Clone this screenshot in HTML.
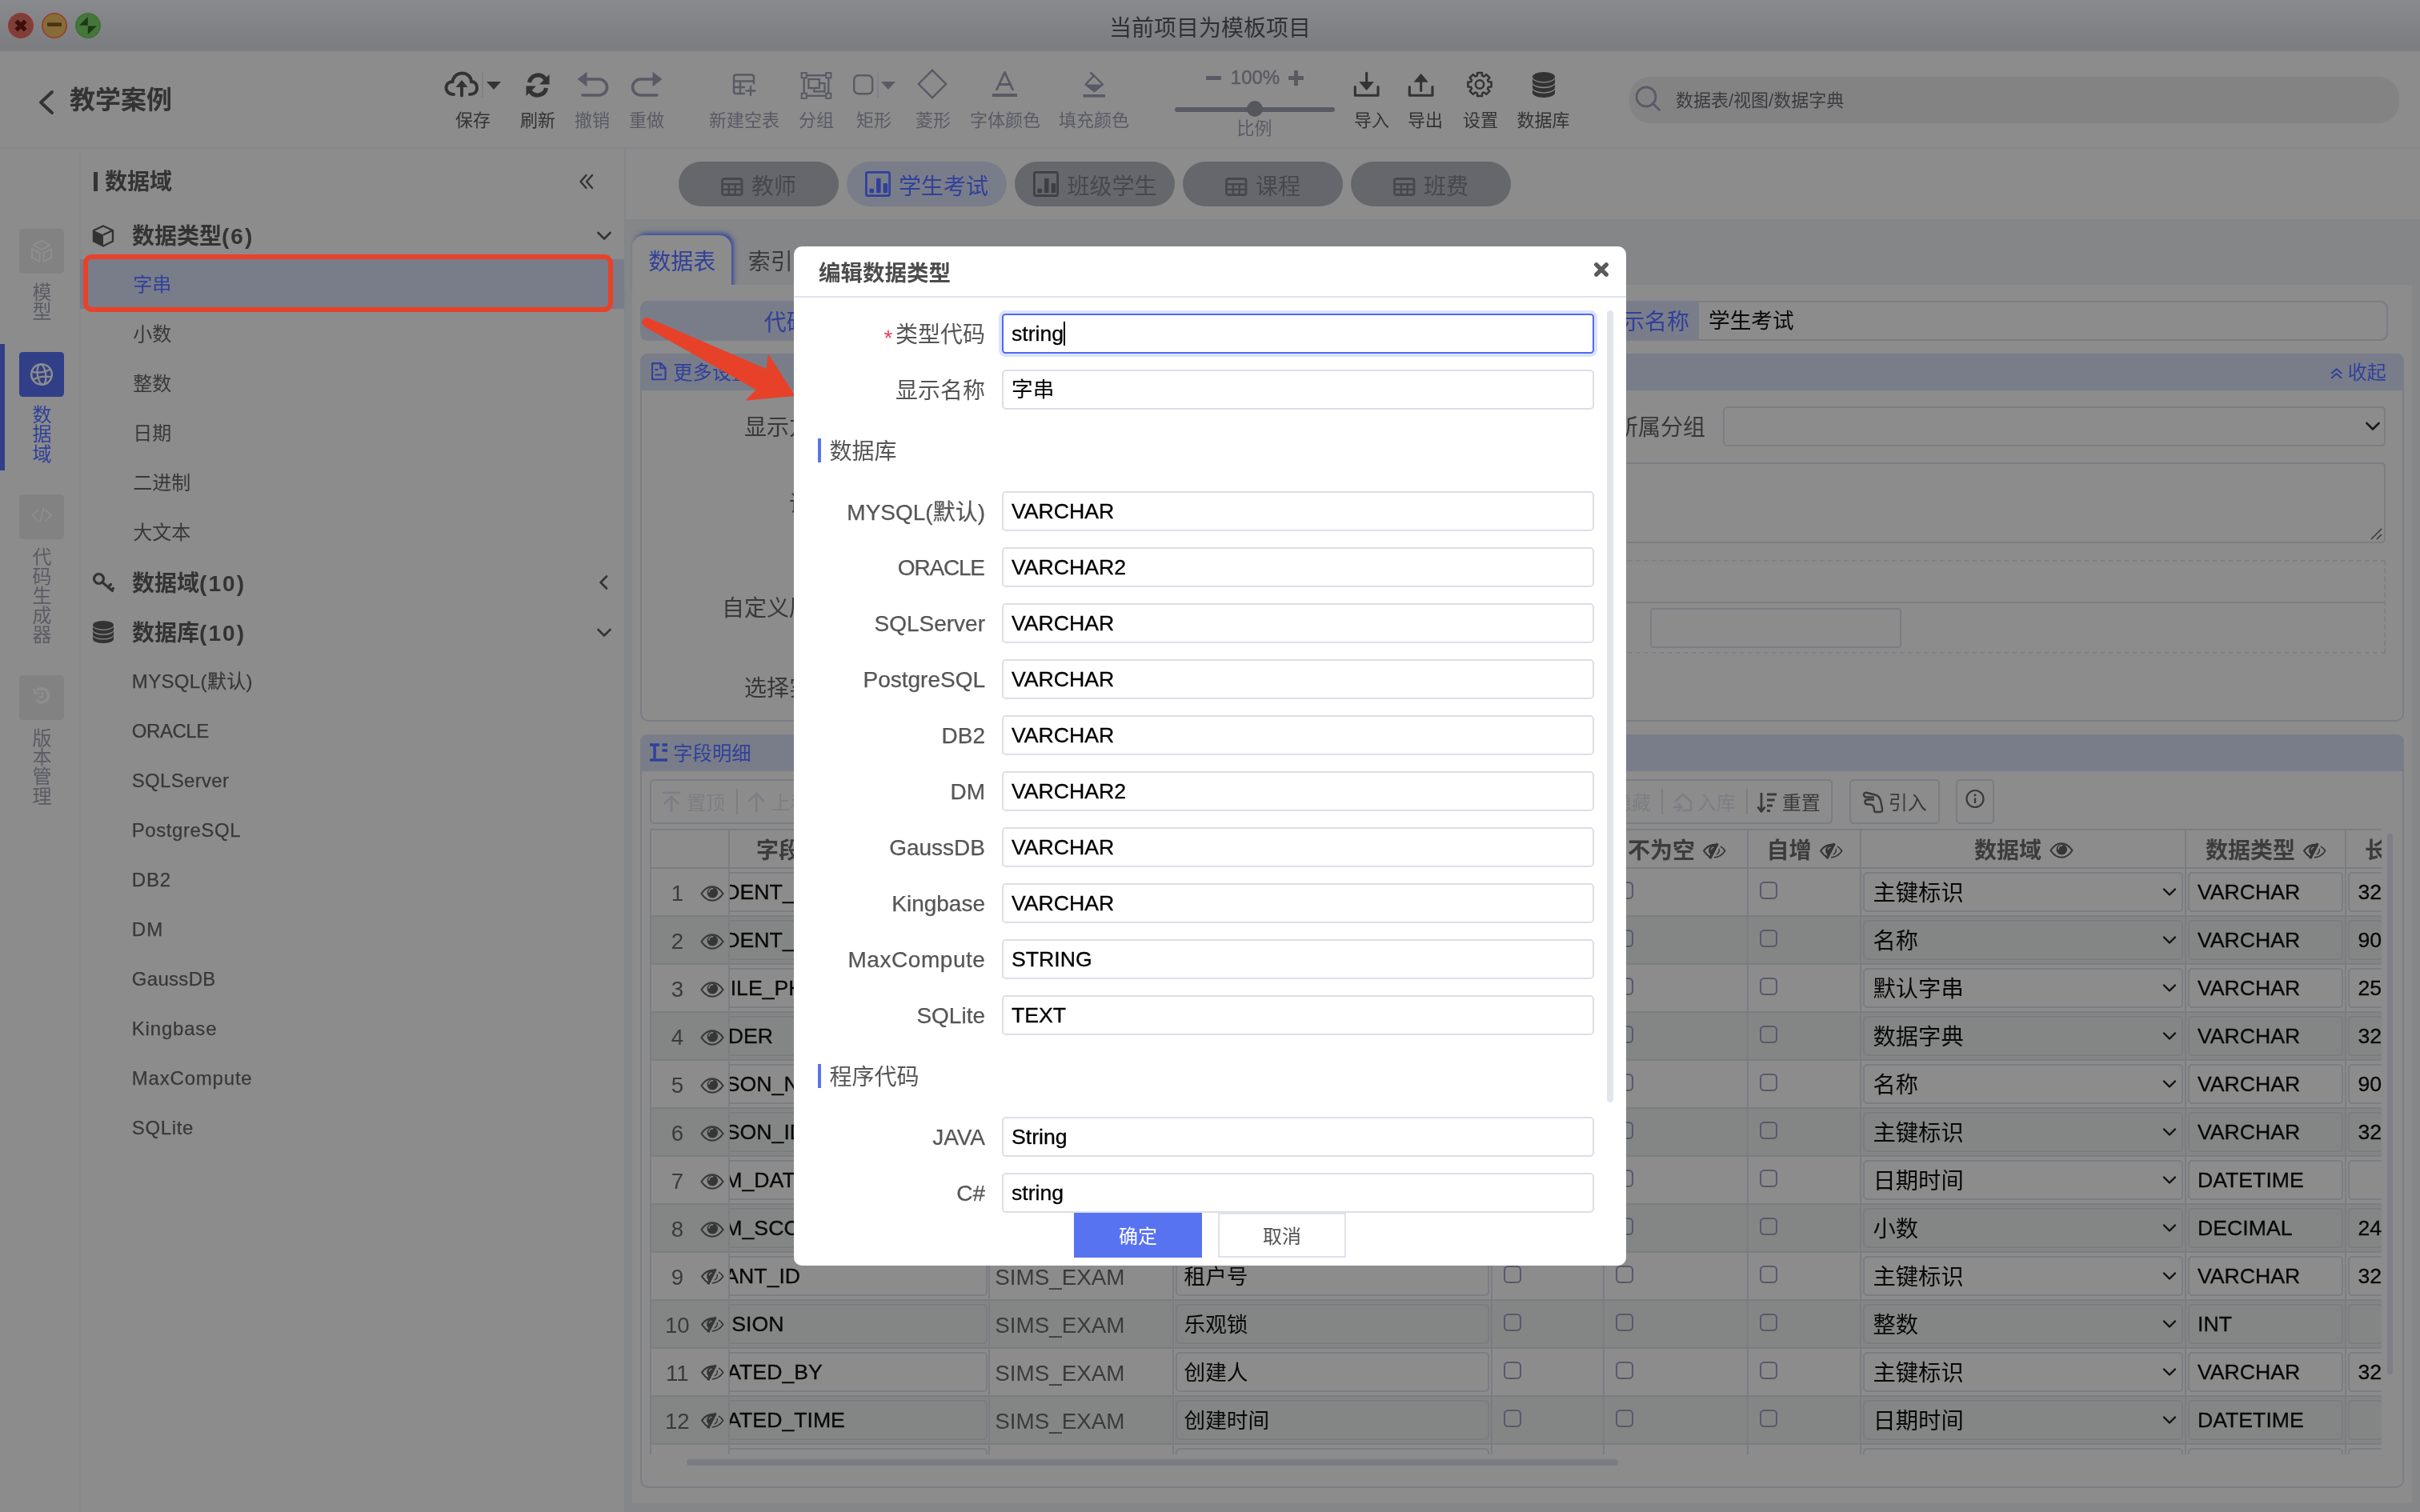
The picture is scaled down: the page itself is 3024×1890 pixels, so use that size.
<!DOCTYPE html>
<html lang="zh-CN"><head><meta charset="utf-8"><title>编辑数据类型</title>
<style>
html,body{margin:0;padding:0}
body{width:3024px;height:1890px;position:relative;overflow:hidden;background:#8c8c8c;font-family:'Liberation Sans','Noto Sans CJK SC',sans-serif}
.b{position:absolute;box-sizing:border-box}
.t{position:absolute;white-space:nowrap;font-family:'Liberation Sans','Noto Sans CJK SC',sans-serif}
.clip{position:absolute;overflow:hidden}
#root{position:absolute;left:0;top:0;width:3024px;height:1890px;overflow:hidden;will-change:transform}
</style></head><body><div id="root">
<div class="b" style="left:0px;top:0px;width:3024px;height:64px;background:linear-gradient(#898a8d,#7b7c7f);"></div>
<div class="t" style="top:22.0px;font-size:28px;line-height:28px;color:#303033;left:762.0px;width:1500px;text-align:center;">当前项目为模板项目</div>
<svg class="b" style="left:0px;top:0px;" width="140" height="64" viewBox="0 0 140 64"><circle cx="26" cy="32" r="15.200" fill="#7f3f38" stroke="#923a32" stroke-width="1.600"/><path d="M20.300 26.300 L31.700 37.700 M31.700 26.300 L20.300 37.700" stroke="#3e0e09" stroke-width="5.400" stroke-linecap="butt"/><circle cx="68" cy="32" r="15.200" fill="#866d38" stroke="#983b30" stroke-width="1.600"/><rect x="59" y="28.300" width="18" height="4.600" rx="0.800" fill="#4e3214"/><circle cx="110" cy="32" r="15.200" fill="#45763b" stroke="#40703a" stroke-width="1.600"/><path d="M99 31.700 L109.800 21 L109.800 31.700 Z M121 32.400 L109.800 43 L109.800 32.400 Z" fill="#1d3812"/></svg>
<div class="b" style="left:0px;top:64px;width:3024px;height:122px;background:#8c8c8c;"></div>
<div class="b" style="left:0px;top:184px;width:3024px;height:2px;background:#838588;"></div>
<svg class="b" style="left:40px;top:105px;" width="40" height="46" viewBox="0 0 40 46"><path d="M25 10 L11 23 L25 36" fill="none" stroke="#333" stroke-width="4" stroke-linecap="round" stroke-linejoin="round"/></svg>
<div class="t" style="top:109.3px;font-size:32px;line-height:32px;color:#333;font-weight:700;left:87.0px;">教学案例</div>
<svg class="b" style="left:552px;top:86px;" width="50" height="40" viewBox="0 0 50 40"><path d="M15 32 C7 32 5.5 26 5.5 24 C5.5 19 9 16 13.5 16 C14.5 9 20 5.5 25.5 5.5 C32 5.5 36.5 10 37 16 C41.5 16 44 19.5 44 24 C44 28.5 40.500 32 35 32" fill="none" stroke="#333" stroke-width="4" stroke-linecap="round"/><path d="M25 33.500 V21" stroke="#333" stroke-width="4" stroke-linecap="round"/><path d="M17.5 23 L25 14 L32.5 23 Z" fill="#333"/></svg>
<div class="b" style="left:602px;top:90px;width:2px;height:32px;background:#80818a;"></div>
<svg class="b" style="left:606px;top:100px;" width="22" height="14" viewBox="0 0 22 14"><path d="M2 2 H20 L11 12 Z" fill="#333"/></svg>
<div class="t" style="top:140.3px;font-size:22px;line-height:22px;color:#333;left:-159.0px;width:1500px;text-align:center;">保存</div>
<svg class="b" style="left:654px;top:88px;" width="36" height="36" viewBox="0 0 36 36"><path d="M7.5 15 A11 11 0 0 1 27.5 11" fill="none" stroke="#333" stroke-width="5.2"/><path d="M32.5 5 V17.5 H20 Z" fill="#333"/><path d="M28.5 22 A11 11 0 0 1 8.5 26" fill="none" stroke="#333" stroke-width="5.2"/><path d="M3.5 32 V19.500 H16 Z" fill="#333"/></svg>
<div class="t" style="top:140.3px;font-size:22px;line-height:22px;color:#333;left:-78.0px;width:1500px;text-align:center;">刷新</div>
<svg class="b" style="left:720px;top:89px;" width="42" height="34" viewBox="0 0 42 34"><path d="M13 10 H28.5 A10 10 0 0 1 28.5 30 H8" fill="none" stroke="#5a5a66" stroke-width="3.6" stroke-linecap="round"/><path d="M1.5 10 L13.5 0.800 V19.200 Z" fill="#5a5a66"/></svg>
<div class="t" style="top:140.3px;font-size:22px;line-height:22px;color:#5a5a66;left:-10.0px;width:1500px;text-align:center;">撤销</div>
<svg class="b" style="left:787px;top:89px;" width="42" height="34" viewBox="0 0 42 34"><g transform="translate(42,0) scale(-1,1)"><path d="M13 10 H28.5 A10 10 0 0 1 28.5 30 H8" fill="none" stroke="#5a5a66" stroke-width="3.6" stroke-linecap="round"/><path d="M1.5 10 L13.5 0.800 V19.200 Z" fill="#5a5a66"/></g></svg>
<div class="t" style="top:140.3px;font-size:22px;line-height:22px;color:#5a5a66;left:58.0px;width:1500px;text-align:center;">重做</div>
<svg class="b" style="left:914px;top:90px;" width="32" height="32" viewBox="0 0 32 32"><path d="M28 14 V6.500 Q28 3.500 25 3.500 H6 Q3 3.500 3 6.500 V24 Q3 27 6 27 H16" fill="none" stroke="#5a5a66" stroke-width="2.4" stroke-linecap="round"/><path d="M3 11.500 H28 M11 11.500 V27 M3 19 H17" fill="none" stroke="#5a5a66" stroke-width="2.4"/><path d="M24 18 V29 M18.5 23.500 H29.500" stroke="#5a5a66" stroke-width="2.4" stroke-linecap="round"/></svg>
<div class="t" style="top:140.3px;font-size:22px;line-height:22px;color:#5a5a66;left:180.0px;width:1500px;text-align:center;">新建空表</div>
<svg class="b" style="left:1000px;top:88px;" width="40" height="36" viewBox="0 0 40 36"><rect x="4.700" y="6.200" width="30.600" height="25.600" fill="none" stroke="#5a5a66" stroke-width="2.300"/><rect x="1.6" y="3.1" width="6.200" height="6.200" fill="#8c8c8c" stroke="#5a5a66" stroke-width="2"/><rect x="32.2" y="3.1" width="6.200" height="6.200" fill="#8c8c8c" stroke="#5a5a66" stroke-width="2"/><rect x="1.6" y="28.7" width="6.200" height="6.200" fill="#8c8c8c" stroke="#5a5a66" stroke-width="2"/><rect x="32.2" y="28.7" width="6.200" height="6.200" fill="#8c8c8c" stroke="#5a5a66" stroke-width="2"/><rect x="17.300" y="16" width="13.200" height="10.400" fill="none" stroke="#5a5a66" stroke-width="2.300"/><rect x="10.400" y="11" width="13.400" height="11" fill="#8c8c8c" stroke="#5a5a66" stroke-width="2.300"/></svg>
<div class="t" style="top:140.3px;font-size:22px;line-height:22px;color:#5a5a66;left:270.0px;width:1500px;text-align:center;">分组</div>
<svg class="b" style="left:1064px;top:91px;" width="30" height="30" viewBox="0 0 30 30"><rect x="3.200" y="3.200" width="23" height="23" rx="5.500" fill="none" stroke="#5a5a66" stroke-width="2.4"/></svg>
<div class="b" style="left:1096px;top:90px;width:2px;height:32px;background:#80818a;"></div>
<svg class="b" style="left:1099px;top:100px;" width="22" height="14" viewBox="0 0 22 14"><path d="M2 2 H20 L11 12 Z" fill="#5a5a66"/></svg>
<div class="t" style="top:140.3px;font-size:22px;line-height:22px;color:#5a5a66;left:342.0px;width:1500px;text-align:center;">矩形</div>
<svg class="b" style="left:1145px;top:85px;" width="40" height="40" viewBox="0 0 40 40"><path d="M20 2.800 L37.200 20 L20 37.200 L2.800 20 Z" fill="none" stroke="#5a5a66" stroke-width="2.4" stroke-linejoin="miter"/></svg>
<div class="t" style="top:140.3px;font-size:22px;line-height:22px;color:#5a5a66;left:416.0px;width:1500px;text-align:center;">菱形</div>
<svg class="b" style="left:1238px;top:88px;" width="36" height="36" viewBox="0 0 36 36"><path d="M7 25 L17.500 2.500 L28 25 M10.800 17.500 H24.200" fill="none" stroke="#5a5a66" stroke-width="2.800" stroke-linejoin="round"/><rect x="2" y="29" width="31" height="4" fill="#5a5a66"/></svg>
<div class="t" style="top:140.3px;font-size:22px;line-height:22px;color:#5a5a66;left:506.0px;width:1500px;text-align:center;">字体颜色</div>
<svg class="b" style="left:1351px;top:88px;" width="34" height="36" viewBox="0 0 34 36"><path d="M12 3 L16 6.500 M16 6.500 L27 17.500 L16.500 26 L5.500 17.500 Z" fill="none" stroke="#5a5a66" stroke-width="2.400" stroke-linejoin="round" stroke-linecap="round"/><path d="M5.500 17.500 H27 L16.500 26.500 Z" fill="#5a5a66"/><rect x="2.500" y="30" width="27.500" height="3.600" fill="#5a5a66"/></svg>
<div class="t" style="top:140.3px;font-size:22px;line-height:22px;color:#5a5a66;left:617.0px;width:1500px;text-align:center;">填充颜色</div>
<div class="b" style="left:1507px;top:95px;width:19px;height:4.5px;background:#5a5a66;border-radius:1px;"></div>
<div class="t" style="top:85.0px;font-size:24px;line-height:24px;color:#5a5a66;left:818.5px;width:1500px;text-align:center;-webkit-text-stroke:0.5px #5a5a66;">100%</div>
<div class="b" style="left:1610px;top:95px;width:19px;height:4.5px;background:#5a5a66;"></div>
<div class="b" style="left:1617.2px;top:87.8px;width:4.5px;height:19px;background:#5a5a66;"></div>
<div class="b" style="left:1468px;top:134px;width:200px;height:6px;background:#5a5a66;border-radius:3px;"></div>
<div class="b" style="left:1557.5px;top:126px;width:20px;height:20px;background:#56565f;border-radius:10px;"></div>
<div class="t" style="top:149.8px;font-size:22px;line-height:22px;color:#5a5a66;left:817.5px;width:1500px;text-align:center;">比例</div>
<svg class="b" style="left:1690px;top:89px;" width="36" height="36" viewBox="0 0 36 36"><path d="M3.300 19.500 V30.300 H32 V19.500" fill="none" stroke="#333" stroke-width="3.100" stroke-linejoin="round" stroke-linecap="round"/><path d="M17.650 2.200 V15" stroke="#333" stroke-width="3.100" stroke-linecap="round"/><path d="M9 13.500 H26.300 L17.650 23.500 Z" fill="#333" stroke="#333" stroke-width="0.800" stroke-linejoin="round"/></svg>
<div class="t" style="top:140.3px;font-size:22px;line-height:22px;color:#333;left:964.0px;width:1500px;text-align:center;">导入</div>
<svg class="b" style="left:1758px;top:89px;" width="36" height="36" viewBox="0 0 36 36"><path d="M3.300 19.500 V30.300 H32 V19.500" fill="none" stroke="#333" stroke-width="3.100" stroke-linejoin="round" stroke-linecap="round"/><path d="M17.650 12 V24.500" stroke="#333" stroke-width="3.100" stroke-linecap="round"/><path d="M9.300 13.300 H26 L17.650 3.300 Z" fill="#333" stroke="#333" stroke-width="0.800" stroke-linejoin="round"/></svg>
<div class="t" style="top:140.3px;font-size:22px;line-height:22px;color:#333;left:1031.0px;width:1500px;text-align:center;">导出</div>
<svg class="b" style="left:1831px;top:87px;" width="36" height="36" viewBox="0 0 36 36"><path d="M28.85 15.35 L32.61 15.59 L32.61 21.41 L28.85 21.65 L27.90 23.94 L30.39 26.78 L26.28 30.89 L23.44 28.40 L21.15 29.35 L20.91 33.11 L15.09 33.11 L14.85 29.35 L12.56 28.40 L9.72 30.89 L5.61 26.78 L8.10 23.94 L7.15 21.65 L3.39 21.41 L3.39 15.59 L7.15 15.35 L8.10 13.06 L5.61 10.22 L9.72 6.11 L12.56 8.60 L14.85 7.65 L15.09 3.89 L20.91 3.89 L21.15 7.65 L23.44 8.60 L26.28 6.11 L30.39 10.22 L27.90 13.06 Z" fill="none" stroke="#333" stroke-width="2.500" stroke-linejoin="round"/><circle cx="18" cy="18.500" r="5.200" fill="none" stroke="#333" stroke-width="2.500"/></svg>
<div class="t" style="top:140.3px;font-size:22px;line-height:22px;color:#333;left:1100.0px;width:1500px;text-align:center;">设置</div>
<svg class="b" style="left:1915px;top:90px;" width="28" height="32" viewBox="0 0 28 32"><ellipse cx="14.00" cy="6.08" rx="14.00" ry="6.08" fill="#333"/><path d="M0 7.53 A14.00 6.08 0 0 0 28.00 7.53 V12.69 A14.00 6.08 0 0 1 0 12.69 Z" fill="#333"/><path d="M0 14.15 A14.00 6.08 0 0 0 28.00 14.15 V19.31 A14.00 6.08 0 0 1 0 19.31 Z" fill="#333"/><path d="M0 20.76 A14.00 6.08 0 0 0 28.00 20.76 V25.92 A14.00 6.08 0 0 1 0 25.92 Z" fill="#333"/></svg>
<div class="t" style="top:140.3px;font-size:22px;line-height:22px;color:#333;left:1178.5px;width:1500px;text-align:center;">数据库</div>
<div class="b" style="left:2036px;top:96px;width:962px;height:58px;background:#838383;border-radius:26px;"></div>
<svg class="b" style="left:2040px;top:104px;" width="40" height="40" viewBox="0 0 40 40"><circle cx="17" cy="17" r="12" fill="none" stroke="#5a5a66" stroke-width="2.800"/><path d="M25.500 25.500 L33.500 33.500" stroke="#5a5a66" stroke-width="2.800" stroke-linecap="round"/></svg>
<div class="t" style="top:114.8px;font-size:22px;line-height:22px;color:#3b3b40;left:2094.0px;">数据表/视图/数据字典</div>
<div class="b" style="left:98.5px;top:186px;width:2px;height:1704px;background:#878889;"></div>
<div class="b" style="left:24px;top:286px;width:56px;height:56px;background:#828282;border-radius:4.500px;"></div>
<svg class="b" style="left:36px;top:298px;" width="32" height="32" viewBox="0 0 32 32"><path d="M16.100 2.900 L26.600 8.400 L16.100 14.100 L5.400 8.400 Z M4 13.100 L13.600 18 V29 L4 24 Z M28.200 13.100 L18.600 18 V29 L28.200 24 Z" fill="none" stroke="#8e8e8e" stroke-width="2" stroke-linejoin="round"/></svg>
<div class="t" style="top:353.5px;font-size:24px;line-height:24px;color:#5b5b66;left:-697.5px;width:1500px;text-align:center;">模</div>
<div class="t" style="top:377.9px;font-size:24px;line-height:24px;color:#5b5b66;left:-697.5px;width:1500px;text-align:center;">型</div>
<div class="b" style="left:0px;top:430px;width:6px;height:158px;background:#303f88;"></div>
<div class="b" style="left:24px;top:440px;width:56px;height:56px;background:#303f88;border-radius:4.500px;"></div>
<svg class="b" style="left:36px;top:452px;" width="32" height="32" viewBox="0 0 32 32"><g transform="rotate(-8 16 16)"><circle cx="16" cy="16" r="12.800" fill="none" stroke="#8c8c8c" stroke-width="2.500"/><ellipse cx="16" cy="16" rx="5.200" ry="12.800" fill="none" stroke="#8c8c8c" stroke-width="2.300"/><path d="M4.200 11 Q16 15.500 27.800 11 M4.200 21 Q16 16.800 27.800 21" fill="none" stroke="#8c8c8c" stroke-width="2.300"/></g></svg>
<div class="t" style="top:507.0px;font-size:24px;line-height:24px;color:#30409a;left:-697.5px;width:1500px;text-align:center;">数</div>
<div class="t" style="top:531.4px;font-size:24px;line-height:24px;color:#30409a;left:-697.5px;width:1500px;text-align:center;">据</div>
<div class="t" style="top:555.8px;font-size:24px;line-height:24px;color:#30409a;left:-697.5px;width:1500px;text-align:center;">域</div>
<div class="b" style="left:24px;top:618px;width:56px;height:56px;background:#828282;border-radius:4.500px;"></div>
<svg class="b" style="left:36px;top:630px;" width="32" height="32" viewBox="0 0 32 32"><path d="M11.100 7.800 L4.300 14.300 L11.100 20.800 M21.200 7.800 L28 14.300 L21.200 20.800 M18.600 5.300 L13.700 23" fill="none" stroke="#8e8e8e" stroke-width="1.700" stroke-linecap="round" stroke-linejoin="miter"/></svg>
<div class="t" style="top:684.5px;font-size:24px;line-height:24px;color:#5b5b66;left:-697.5px;width:1500px;text-align:center;">代</div>
<div class="t" style="top:708.9px;font-size:24px;line-height:24px;color:#5b5b66;left:-697.5px;width:1500px;text-align:center;">码</div>
<div class="t" style="top:733.3px;font-size:24px;line-height:24px;color:#5b5b66;left:-697.5px;width:1500px;text-align:center;">生</div>
<div class="t" style="top:757.7px;font-size:24px;line-height:24px;color:#5b5b66;left:-697.5px;width:1500px;text-align:center;">成</div>
<div class="t" style="top:782.1px;font-size:24px;line-height:24px;color:#5b5b66;left:-697.5px;width:1500px;text-align:center;">器</div>
<div class="b" style="left:24px;top:844px;width:56px;height:56px;background:#828282;border-radius:4.500px;"></div>
<svg class="b" style="left:36px;top:856px;" width="32" height="32" viewBox="0 0 32 32"><path d="M10.260 6.670 A8.700 8.700 0 1 1 9.270 18.930" fill="none" stroke="#8e8e8e" stroke-width="3.500"/><path d="M5.900 3.800 V11.700 H13.100 Z" fill="#8e8e8e"/><path d="M16.800 9 V15.400 H12.900" fill="none" stroke="#8e8e8e" stroke-width="2.200"/></svg>
<div class="t" style="top:910.5px;font-size:24px;line-height:24px;color:#5b5b66;left:-697.5px;width:1500px;text-align:center;">版</div>
<div class="t" style="top:934.9px;font-size:24px;line-height:24px;color:#5b5b66;left:-697.5px;width:1500px;text-align:center;">本</div>
<div class="t" style="top:959.3px;font-size:24px;line-height:24px;color:#5b5b66;left:-697.5px;width:1500px;text-align:center;">管</div>
<div class="t" style="top:983.7px;font-size:24px;line-height:24px;color:#5b5b66;left:-697.5px;width:1500px;text-align:center;">理</div>
<div class="b" style="left:117px;top:215px;width:5px;height:24px;background:#333;"></div>
<div class="t" style="top:213.5px;font-size:28px;line-height:28px;color:#333;font-weight:700;left:131.0px;">数据域</div>
<svg class="b" style="left:722px;top:216px;" width="22" height="22" viewBox="0 0 22 22"><path d="M10.500 3 L3.500 11 L10.500 19 M18 3 L11 11 L18 19" fill="none" stroke="#333" stroke-width="2.400" stroke-linecap="round" stroke-linejoin="round"/></svg>
<svg class="b" style="left:114px;top:280px;" width="30" height="30" viewBox="0 0 30 30"><path d="M15 2.500 L27 8 V21.500 L15 27.500 L3 21.500 V8 Z" fill="none" stroke="#333" stroke-width="2.400" stroke-linejoin="round"/><path d="M3 8 L15 13.500 V27.500 L3 21.500 Z" fill="#333"/><path d="M15 13.500 L27 8" stroke="#333" stroke-width="2.400"/></svg>
<div class="t" style="top:282.0px;font-size:28px;line-height:28px;color:#333;font-weight:700;left:165.0px;">数据类型<span style="letter-spacing:2px">(6)</span></div>
<svg class="b" style="left:745px;top:288px;" width="20" height="14" viewBox="0 0 20 14"><path d="M2.500 3 L10 10.500 L17.500 3" fill="none" stroke="#333" stroke-width="2.600" stroke-linecap="round" stroke-linejoin="round"/></svg>
<svg class="b" style="left:114px;top:714px;" width="30" height="30" viewBox="0 0 30 30"><circle cx="9.500" cy="9.500" r="6" fill="none" stroke="#333" stroke-width="3.200"/><path d="M14 14 L26.500 24.500 M21 20 L24.500 16.500 M25.500 23.800 L27.500 21.500" fill="none" stroke="#333" stroke-width="3.200" stroke-linecap="round"/></svg>
<div class="t" style="top:716.0px;font-size:28px;line-height:28px;color:#333;font-weight:700;left:165.0px;">数据域<span style="letter-spacing:2.1px">(10)</span></div>
<svg class="b" style="left:747px;top:718px;" width="14" height="20" viewBox="0 0 14 20"><path d="M11 2.500 L3.500 10 L11 17.500" fill="none" stroke="#333" stroke-width="2.600" stroke-linecap="round" stroke-linejoin="round"/></svg>
<svg class="b" style="left:116px;top:776px;" width="26" height="28" viewBox="0 0 26 28"><ellipse cx="13.00" cy="5.32" rx="13.00" ry="5.32" fill="#333"/><path d="M0 6.59 A13.00 5.32 0 0 0 26.00 6.59 V11.11 A13.00 5.32 0 0 1 0 11.11 Z" fill="#333"/><path d="M0 12.38 A13.00 5.32 0 0 0 26.00 12.38 V16.89 A13.00 5.32 0 0 1 0 16.89 Z" fill="#333"/><path d="M0 18.17 A13.00 5.32 0 0 0 26.00 18.17 V22.68 A13.00 5.32 0 0 1 0 22.68 Z" fill="#333"/></svg>
<div class="t" style="top:778.0px;font-size:28px;line-height:28px;color:#333;font-weight:700;left:165.0px;">数据库<span style="letter-spacing:2.1px">(10)</span></div>
<svg class="b" style="left:745px;top:784px;" width="20" height="14" viewBox="0 0 20 14"><path d="M2.500 3 L10 10.500 L17.500 3" fill="none" stroke="#333" stroke-width="2.600" stroke-linecap="round" stroke-linejoin="round"/></svg>
<div class="b" style="left:100px;top:324px;width:680px;height:62px;background:#797d8a;"></div>
<div class="b" style="left:104px;top:318px;width:662px;height:72px;border:6px solid #e8412a;border-radius:11px;"></div>
<div class="t" style="top:344.0px;font-size:24px;line-height:24px;color:#30409a;left:166.3px;">字串</div>
<div class="t" style="top:406.0px;font-size:24px;line-height:24px;color:#383838;left:166.3px;">小数</div>
<div class="t" style="top:468.0px;font-size:24px;line-height:24px;color:#383838;left:166.3px;">整数</div>
<div class="t" style="top:530.0px;font-size:24px;line-height:24px;color:#383838;left:166.3px;">日期</div>
<div class="t" style="top:592.0px;font-size:24px;line-height:24px;color:#383838;left:166.3px;">二进制</div>
<div class="t" style="top:654.0px;font-size:24px;line-height:24px;color:#383838;left:166.3px;">大文本</div>
<div class="t" style="top:840.0px;font-size:24px;line-height:24px;color:#383838;left:164.8px;letter-spacing:0.35px;-webkit-text-stroke:0.25px #383838;">MYSQL(默认)</div>
<div class="t" style="top:902.0px;font-size:24px;line-height:24px;color:#383838;left:164.8px;letter-spacing:-0.45px;-webkit-text-stroke:0.25px #383838;">ORACLE</div>
<div class="t" style="top:964.0px;font-size:24px;line-height:24px;color:#383838;left:164.8px;letter-spacing:0.3px;-webkit-text-stroke:0.25px #383838;">SQLServer</div>
<div class="t" style="top:1026.0px;font-size:24px;line-height:24px;color:#383838;left:164.8px;letter-spacing:0.55px;-webkit-text-stroke:0.25px #383838;">PostgreSQL</div>
<div class="t" style="top:1088.0px;font-size:24px;line-height:24px;color:#383838;left:164.8px;letter-spacing:0.8px;-webkit-text-stroke:0.25px #383838;">DB2</div>
<div class="t" style="top:1150.0px;font-size:24px;line-height:24px;color:#383838;left:164.8px;letter-spacing:1.2px;-webkit-text-stroke:0.25px #383838;">DM</div>
<div class="t" style="top:1212.0px;font-size:24px;line-height:24px;color:#383838;left:164.8px;letter-spacing:0.3px;-webkit-text-stroke:0.25px #383838;">GaussDB</div>
<div class="t" style="top:1274.0px;font-size:24px;line-height:24px;color:#383838;left:164.8px;letter-spacing:0.8px;-webkit-text-stroke:0.25px #383838;">Kingbase</div>
<div class="t" style="top:1336.0px;font-size:24px;line-height:24px;color:#383838;left:164.8px;letter-spacing:0.8px;-webkit-text-stroke:0.25px #383838;">MaxCompute</div>
<div class="t" style="top:1398.0px;font-size:24px;line-height:24px;color:#383838;left:164.8px;letter-spacing:0.65px;-webkit-text-stroke:0.25px #383838;">SQLite</div>
<div class="b" style="left:779.5px;top:186px;width:2px;height:1704px;background:#848589;"></div>
<div class="b" style="left:848px;top:202px;width:200px;height:56px;background:#66666d;border-radius:28px;"></div>
<svg class="b" style="left:901px;top:222px;" width="28" height="24" viewBox="0 0 28 24"><rect x="1.500" y="1.500" width="24.500" height="20" rx="2.500" fill="none" stroke="#47474d" stroke-width="2.800"/><path d="M1.500 8.200 H26 M1.500 14.800 H26 M9.800 8.200 V21.500 M17.800 8.200 V21.500" stroke="#47474d" stroke-width="2.400"/></svg>
<div class="t" style="top:220.2px;font-size:28px;line-height:28px;color:#47474d;left:939.0px;">教师</div>
<div class="b" style="left:1058px;top:202px;width:200px;height:56px;background:#797d8a;border-radius:28px;"></div>
<svg class="b" style="left:1081px;top:214px;" width="34" height="34" viewBox="0 0 34 34"><rect x="1.400" y="1.400" width="29.200" height="29.200" rx="1.800" fill="none" stroke="#30409a" stroke-width="2.700"/><rect x="5.400" y="21.700" width="5.600" height="5.600" rx="1" fill="#30409a"/><rect x="14" y="8.700" width="5.600" height="18.600" rx="1.200" fill="#30409a"/><rect x="22.600" y="14.900" width="5.600" height="12.400" rx="1.200" fill="#30409a"/></svg>
<div class="t" style="top:220.2px;font-size:28px;line-height:28px;color:#30409a;left:1123.0px;">学生考试</div>
<div class="b" style="left:1268px;top:202px;width:200px;height:56px;background:#66666d;border-radius:28px;"></div>
<svg class="b" style="left:1291px;top:214px;" width="34" height="34" viewBox="0 0 34 34"><rect x="1.400" y="1.400" width="29.200" height="29.200" rx="1.800" fill="none" stroke="#3e3e43" stroke-width="2.700"/><rect x="5.400" y="21.700" width="5.600" height="5.600" rx="1" fill="#3e3e43"/><rect x="14" y="8.700" width="5.600" height="18.600" rx="1.200" fill="#3e3e43"/><rect x="22.600" y="14.900" width="5.600" height="12.400" rx="1.200" fill="#3e3e43"/></svg>
<div class="t" style="top:220.2px;font-size:28px;line-height:28px;color:#47474d;left:1333.5px;">班级学生</div>
<div class="b" style="left:1478px;top:202px;width:200px;height:56px;background:#66666d;border-radius:28px;"></div>
<svg class="b" style="left:1531px;top:222px;" width="28" height="24" viewBox="0 0 28 24"><rect x="1.500" y="1.500" width="24.500" height="20" rx="2.500" fill="none" stroke="#47474d" stroke-width="2.800"/><path d="M1.500 8.200 H26 M1.500 14.800 H26 M9.800 8.200 V21.500 M17.800 8.200 V21.500" stroke="#47474d" stroke-width="2.400"/></svg>
<div class="t" style="top:220.2px;font-size:28px;line-height:28px;color:#47474d;left:1569.0px;">课程</div>
<div class="b" style="left:1688px;top:202px;width:200px;height:56px;background:#66666d;border-radius:28px;"></div>
<svg class="b" style="left:1741px;top:222px;" width="28" height="24" viewBox="0 0 28 24"><rect x="1.500" y="1.500" width="24.500" height="20" rx="2.500" fill="none" stroke="#47474d" stroke-width="2.800"/><path d="M1.500 8.200 H26 M1.500 14.800 H26 M9.800 8.200 V21.500 M17.800 8.200 V21.500" stroke="#47474d" stroke-width="2.400"/></svg>
<div class="t" style="top:220.2px;font-size:28px;line-height:28px;color:#47474d;left:1779.0px;">班费</div>
<div class="b" style="left:781.5px;top:274px;width:2242.5px;height:1616px;background:#858688;"></div>
<div class="b" style="left:790px;top:293.5px;width:124px;height:70px;background:#8c8c8c;border-radius:15px 15px 0 0;box-shadow:3px -3px 6px -1px #2c3c9c;"></div>
<div class="b" style="left:790px;top:355.5px;width:2224px;height:1523.5px;background:#8c8c8c;"></div>
<div class="t" style="top:313.7px;font-size:28px;line-height:28px;color:#30409a;left:810.2px;">数据表</div>
<div class="t" style="top:313.7px;font-size:28px;line-height:28px;color:#3a3a3a;left:934.7px;">索引</div>
<div class="b" style="left:800px;top:376px;width:2184px;height:50px;background:#797d8a;border-radius:9px;"></div>
<div class="t" style="top:389.7px;font-size:28px;line-height:28px;color:#30409a;left:954.7px;">代码</div>
<div class="t" style="top:389.2px;font-size:28px;line-height:28px;color:#30409a;left:611.0px;width:1500px;text-align:right;">显示名称</div>
<div class="b" style="left:2123px;top:376px;width:861px;height:50px;background:#8c8c8c;border:2px solid #7b7d82;border-left:none;border-radius:0 10px 10px 0;"></div>
<div class="t" style="top:388.1px;font-size:26.67px;line-height:26.67px;color:#0a0a0a;left:2135.0px;">学生考试</div>
<div class="b" style="left:800px;top:442px;width:2204px;height:460px;border:2px solid #7b7d82;border-radius:10px;"></div>
<div class="b" style="left:800px;top:442px;width:2204px;height:46px;background:#797d8a;border-radius:9px 9px 0 0;"></div>
<svg class="b" style="left:812px;top:452px;" width="24" height="26" viewBox="0 0 24 26"><path d="M3.100 2.100 H13.600 L19.500 8 V22.300 H3.100 Z" fill="none" stroke="#30409a" stroke-width="2.100" stroke-linejoin="round"/><path d="M13.300 2.300 V8.300 H19.300 M6.400 10 H10.600 M6.400 16.500 H15.200" fill="none" stroke="#30409a" stroke-width="2.100"/></svg>
<div class="t" style="top:454.1px;font-size:24.3px;line-height:24.3px;color:#30409a;left:841.3px;">更多设置</div>
<svg class="b" style="left:2911px;top:456px;" width="18" height="20" viewBox="0 0 18 20"><path d="M2.800 10.500 L8.700 5.200 L14.600 10.500 M2.800 16.300 L8.700 11 L14.600 16.300" fill="none" stroke="#30409a" stroke-width="1.900" stroke-linecap="round" stroke-linejoin="round"/></svg>
<div class="t" style="top:454.4px;font-size:24px;line-height:24px;color:#30409a;left:2933.7px;">收起</div>
<div class="t" style="top:521.0px;font-size:28px;line-height:28px;color:#383838;left:-458.0px;width:1500px;text-align:right;">显示方式</div>
<div class="t" style="top:617.0px;font-size:28px;line-height:28px;color:#383838;left:-458.0px;width:1500px;text-align:right;">说明</div>
<div class="t" style="top:747.0px;font-size:28px;line-height:28px;color:#383838;left:-458.0px;width:1500px;text-align:right;">自定义属性</div>
<div class="t" style="top:847.0px;font-size:28px;line-height:28px;color:#383838;left:-458.0px;width:1500px;text-align:right;">选择实体</div>
<div class="t" style="top:521.0px;font-size:28px;line-height:28px;color:#383838;left:631.0px;width:1500px;text-align:right;">所属分组</div>
<div class="b" style="left:2153px;top:508px;width:828px;height:50px;border:2px solid #7b7d82;border-radius:5px;"></div>
<svg class="b" style="left:2955px;top:526px;" width="20" height="14" viewBox="0 0 20 14"><path d="M2.500 3 L10 10.500 L17.500 3" fill="none" stroke="#1a1a1a" stroke-width="2.600" stroke-linecap="round" stroke-linejoin="round"/></svg>
<div class="b" style="left:1062px;top:578px;width:1919px;height:101px;border:2px solid #7b7d82;border-radius:5px;"></div>
<svg class="b" style="left:2960px;top:658px;" width="18" height="18" viewBox="0 0 18 18"><path d="M3 16 L16 3 M10 16 L16 10" stroke="#3a3a3a" stroke-width="1.600"/></svg>
<div class="b" style="left:1062px;top:700px;width:1919px;height:117px;border:2px dashed #7f8087;"></div>
<div class="b" style="left:1064px;top:752px;width:1915px;height:2px;background:#7b7d82;"></div>
<div class="b" style="left:2062px;top:760px;width:314px;height:50px;border:2px solid #7b7d82;border-radius:4px;"></div>
<div class="b" style="left:800px;top:918px;width:2204px;height:942px;border:2px solid #7b7d82;border-radius:10px;"></div>
<div class="b" style="left:800px;top:918px;width:2204px;height:46px;background:#797d8a;border-radius:9px 9px 0 0;"></div>
<svg class="b" style="left:810px;top:927px;" width="28" height="28" viewBox="0 0 28 28"><path d="M2 4 H14 M8 4 V21 M2 23 H24 M17.500 4 H24 M17.500 11 H24" fill="none" stroke="#30409a" stroke-width="3.400"/></svg>
<div class="t" style="top:930.2px;font-size:24.3px;line-height:24.3px;color:#30409a;left:841.3px;">字段明细</div>
<div class="b" style="left:812px;top:974px;width:1478px;height:56px;border:2px solid #7b7d82;border-radius:5px;"></div>
<svg class="b" style="left:826px;top:988px;" width="26" height="28" viewBox="0 0 26 28"><path d="M3 3 H23 M13 26 V9 M4.500 16.500 L13 8 L21.500 16.500" fill="none" stroke="#7d7e84" stroke-width="2.600" stroke-linecap="round" stroke-linejoin="round"/></svg>
<div class="t" style="top:991.6px;font-size:24px;line-height:24px;color:#7d7e84;left:858.0px;">置顶</div>
<div class="b" style="left:920px;top:986px;width:2px;height:32px;background:#7b7d82;"></div>
<svg class="b" style="left:932px;top:988px;" width="26" height="28" viewBox="0 0 26 28"><path d="M13 26 V4 M4 13 L13 4 L22 13" fill="none" stroke="#7d7e84" stroke-width="2.600" stroke-linecap="round" stroke-linejoin="round"/></svg>
<div class="t" style="top:991.6px;font-size:24px;line-height:24px;color:#7d7e84;left:964.0px;">上移</div>
<div class="t" style="top:991.6px;font-size:24px;line-height:24px;color:#7d7e84;left:2015.0px;">隐藏</div>
<div class="b" style="left:2076px;top:986px;width:2px;height:32px;background:#7b7d82;"></div>
<svg class="b" style="left:2089px;top:990px;" width="28" height="26" viewBox="0 0 28 26"><path d="M4 12 L14 3 L24 12 V23 H14 M3 19 H12 M8 14.500 L12.500 19 L8 23.500" fill="none" stroke="#7d7e84" stroke-width="2.400" stroke-linecap="round" stroke-linejoin="round"/></svg>
<div class="t" style="top:991.6px;font-size:24px;line-height:24px;color:#7d7e84;left:2120.8px;">入库</div>
<div class="b" style="left:2181.5px;top:986px;width:2px;height:32px;background:#7b7d82;"></div>
<svg class="b" style="left:2195px;top:988px;" width="28" height="30" viewBox="0 0 28 30"><path d="M6 3 V26 M1.500 20.500 L6 26.500 L10.500 20.500" fill="none" stroke="#3a3a3a" stroke-width="2.800" stroke-linejoin="round"/><path d="M13 5 H25 M13 12 H22.500 M13 19 H20 M13 25.500 H17" stroke="#3a3a3a" stroke-width="3"/></svg>
<div class="t" style="top:991.6px;font-size:24px;line-height:24px;color:#3a3a3a;left:2226.8px;">重置</div>
<div class="b" style="left:2311px;top:974px;width:113px;height:56px;border:2px solid #7b7d82;border-radius:5px;"></div>
<svg class="b" style="left:2326px;top:988px;" width="30" height="30" viewBox="0 0 30 30"><path d="M3 5 C3 3 5 2.500 7 3 L17 5.500 C21 6.500 23 9 24 13 L26 23 C26.500 25.500 25.500 27 23.500 27 H18 C16.500 27 16 26 16 24.500 C16 20 14 17.500 10 17.500 H8 C5.500 17.500 4.500 16 4.500 14.500 C4.500 13 5.500 11.500 8 11.500 H15 M3 5 C3 7.500 4.500 8.500 7 8.500 H15" fill="none" stroke="#3a3a3a" stroke-width="2.400" stroke-linecap="round" stroke-linejoin="round"/></svg>
<div class="t" style="top:991.6px;font-size:24px;line-height:24px;color:#3a3a3a;left:2359.8px;">引入</div>
<div class="b" style="left:2444px;top:974px;width:48px;height:56px;border:2px solid #7b7d82;border-radius:5px;"></div>
<svg class="b" style="left:2455px;top:986px;" width="26" height="26" viewBox="0 0 26 26"><circle cx="13" cy="12.500" r="10.500" fill="none" stroke="#3a3a3a" stroke-width="2.200"/><path d="M13 11.500 V18" stroke="#3a3a3a" stroke-width="2.400"/><circle cx="13" cy="7.800" r="1.500" fill="#3a3a3a"/></svg>
<div class="clip" style="left:812px;top:1036px;width:2164px;height:782px">
<div class="b" style="left:0px;top:0px;width:2400px;height:50px;background:#8c8c8c;"></div>
<div class="t" style="top:13.5px;font-size:28px;line-height:28px;color:#3c3c3c;font-weight:700;left:133.0px;">字段代码</div>
<div class="t" style="top:13.5px;font-size:28px;line-height:28px;color:#3c3c3c;font-weight:700;left:-194.0px;width:1500px;text-align:right;">不为空</div>
<svg class="b" style="left:1315px;top:15.5px;" width="30" height="23" viewBox="0 0 30 23"><path d="M18 3.600 C11 3.600 5 7 2 11.500 C4 14.500 6.500 17.500 10 19.500" fill="none" stroke="#363636" stroke-width="2.200" stroke-linecap="round" stroke-linejoin="round"/><path d="M17.800 5.200 A6.300 6.300 0 0 0 11.800 17.200 Z" fill="#363636"/><path d="M19.300 2.200 L9.700 21.300" stroke="#363636" stroke-width="3.300"/><path d="M11.300 9.800 A3.600 3.600 0 0 1 14.200 7.200" fill="none" stroke="#8c8c8c" stroke-width="1.300" stroke-linecap="round"/><path d="M23.400 6.400 C25.600 7.800 27.600 9.600 28.600 11.500 C25.500 16.300 21 19.300 15.500 19.800" fill="none" stroke="#363636" stroke-width="1.700" stroke-linecap="round"/><path d="M21.300 9.600 C21.600 12 20.400 14.400 18.200 15.800" fill="none" stroke="#363636" stroke-width="1.500" stroke-linecap="round"/></svg>
<div class="t" style="top:13.5px;font-size:28px;line-height:28px;color:#3c3c3c;font-weight:700;left:1395.5px;">自增</div>
<svg class="b" style="left:1461px;top:15.5px;" width="30" height="23" viewBox="0 0 30 23"><path d="M18 3.600 C11 3.600 5 7 2 11.500 C4 14.500 6.500 17.500 10 19.500" fill="none" stroke="#363636" stroke-width="2.200" stroke-linecap="round" stroke-linejoin="round"/><path d="M17.800 5.200 A6.300 6.300 0 0 0 11.800 17.200 Z" fill="#363636"/><path d="M19.300 2.200 L9.700 21.300" stroke="#363636" stroke-width="3.300"/><path d="M11.300 9.800 A3.600 3.600 0 0 1 14.200 7.200" fill="none" stroke="#8c8c8c" stroke-width="1.300" stroke-linecap="round"/><path d="M23.400 6.400 C25.600 7.800 27.600 9.600 28.600 11.500 C25.500 16.300 21 19.300 15.500 19.800" fill="none" stroke="#363636" stroke-width="1.700" stroke-linecap="round"/><path d="M21.300 9.600 C21.600 12 20.400 14.400 18.200 15.800" fill="none" stroke="#363636" stroke-width="1.500" stroke-linecap="round"/></svg>
<div class="t" style="top:13.5px;font-size:28px;line-height:28px;color:#3c3c3c;font-weight:700;left:1655.0px;">数据域</div>
<svg class="b" style="left:1748.5px;top:16.5px;" width="30" height="20" viewBox="0 0 30 20"><path d="M1.400 10 C5.500 4 10.500 1.200 15 1.200 C19.500 1.200 24.500 4 28.600 10 C24.500 16 19.500 18.800 15 18.800 C10.500 18.800 5.500 16 1.400 10 Z" fill="none" stroke="#363636" stroke-width="2.100" stroke-linejoin="round"/><circle cx="15.300" cy="8.700" r="6.800" fill="#363636"/><path d="M10.900 8.300 A4.600 4.600 0 0 1 15.700 3.700" fill="none" stroke="#8c8c8c" stroke-width="1.400" stroke-linecap="round"/></svg>
<div class="t" style="top:13.5px;font-size:28px;line-height:28px;color:#3c3c3c;font-weight:700;left:1944.0px;">数据类型</div>
<svg class="b" style="left:2065px;top:15.5px;" width="30" height="23" viewBox="0 0 30 23"><path d="M18 3.600 C11 3.600 5 7 2 11.500 C4 14.500 6.500 17.500 10 19.500" fill="none" stroke="#363636" stroke-width="2.200" stroke-linecap="round" stroke-linejoin="round"/><path d="M17.800 5.200 A6.300 6.300 0 0 0 11.800 17.200 Z" fill="#363636"/><path d="M19.300 2.200 L9.700 21.300" stroke="#363636" stroke-width="3.300"/><path d="M11.300 9.800 A3.600 3.600 0 0 1 14.200 7.200" fill="none" stroke="#8c8c8c" stroke-width="1.300" stroke-linecap="round"/><path d="M23.400 6.400 C25.600 7.800 27.600 9.600 28.600 11.500 C25.500 16.300 21 19.300 15.500 19.800" fill="none" stroke="#363636" stroke-width="1.700" stroke-linecap="round"/><path d="M21.300 9.600 C21.600 12 20.400 14.400 18.200 15.800" fill="none" stroke="#363636" stroke-width="1.500" stroke-linecap="round"/></svg>
<div class="t" style="top:13.5px;font-size:28px;line-height:28px;color:#3c3c3c;font-weight:700;left:2143.0px;">长度</div>
<div class="b" style="left:0px;top:49px;width:2400px;height:60px;background:#8c8c8c;"></div>
<div class="b" style="left:26px;top:54px;width:396px;height:50px;border:2px solid #7b7d82;border-radius:5px;"></div>
<div class="t" style="top:65.7px;font-size:26.67px;line-height:26.67px;color:#080808;left:40.0px;-webkit-text-stroke:0.3px #080808;">STUDENT_ID</div>
<div class="b" style="left:0px;top:49px;width:100px;height:60px;background:#8c8c8c;"></div>
<div class="t" style="top:66.7px;font-size:27.6px;line-height:27.6px;color:#3a3a3a;left:-715.7px;width:1500px;text-align:center;">1</div>
<svg class="b" style="left:63px;top:71px;" width="30" height="20" viewBox="0 0 30 20"><path d="M1.400 10 C5.500 4 10.500 1.200 15 1.200 C19.500 1.200 24.500 4 28.600 10 C24.500 16 19.500 18.800 15 18.800 C10.500 18.800 5.500 16 1.400 10 Z" fill="none" stroke="#363636" stroke-width="2.100" stroke-linejoin="round"/><circle cx="15.300" cy="8.700" r="6.800" fill="#363636"/><path d="M10.900 8.300 A4.600 4.600 0 0 1 15.700 3.700" fill="none" stroke="#8c8c8c" stroke-width="1.400" stroke-linecap="round"/></svg>
<div class="t" style="top:66.6px;font-size:27.8px;line-height:27.8px;color:#3a3a3a;left:431.3px;">SIMS_EXAM</div>
<div class="b" style="left:657px;top:54px;width:392px;height:50px;border:2px solid #7b7d82;border-radius:5px;"></div>
<div class="t" style="top:66.6px;font-size:26.67px;line-height:26.67px;color:#080808;left:667.5px;">学生ID</div>
<div class="b" style="left:1067px;top:66px;width:22px;height:22px;border:2px solid #59596a;border-radius:5.500px;"></div>
<div class="b" style="left:1207px;top:66px;width:22px;height:22px;border:2px solid #59596a;border-radius:5.500px;"></div>
<div class="b" style="left:1387px;top:66px;width:22px;height:22px;border:2px solid #59596a;border-radius:5.500px;"></div>
<div class="b" style="left:1516px;top:54px;width:400px;height:50px;border:2px solid #7b7d82;border-radius:5px;"></div>
<div class="t" style="top:66.3px;font-size:28.3px;line-height:28.3px;color:#080808;left:1528.5px;">主键标识</div>
<svg class="b" style="left:1889px;top:72px;" width="20" height="14" viewBox="0 0 20 14"><path d="M3 3.500 L10 10.500 L17 3.500" fill="none" stroke="#111" stroke-width="2.400" stroke-linecap="round" stroke-linejoin="round"/></svg>
<div class="b" style="left:1922px;top:54px;width:194px;height:50px;border:2px solid #7b7d82;border-radius:5px;"></div>
<div class="t" style="top:65.7px;font-size:26.67px;line-height:26.67px;color:#080808;left:1934.0px;-webkit-text-stroke:0.3px #080808;">VARCHAR</div>
<div class="b" style="left:2122px;top:54px;width:150px;height:50px;border:2px solid #7b7d82;border-radius:5px;"></div>
<div class="t" style="top:65.7px;font-size:26.67px;line-height:26.67px;color:#080808;left:2134.5px;-webkit-text-stroke:0.3px #080808;">32</div>
<div class="b" style="left:0px;top:109px;width:2400px;height:60px;background:#848685;"></div>
<div class="b" style="left:26px;top:114px;width:396px;height:50px;border:2px solid #7b7d82;border-radius:5px;"></div>
<div class="t" style="top:125.7px;font-size:26.67px;line-height:26.67px;color:#080808;left:40.0px;-webkit-text-stroke:0.3px #080808;">STUDENT_NAME</div>
<div class="b" style="left:0px;top:109px;width:100px;height:60px;background:#848685;"></div>
<div class="t" style="top:126.7px;font-size:27.6px;line-height:27.6px;color:#3a3a3a;left:-715.7px;width:1500px;text-align:center;">2</div>
<svg class="b" style="left:63px;top:131px;" width="30" height="20" viewBox="0 0 30 20"><path d="M1.400 10 C5.500 4 10.500 1.200 15 1.200 C19.500 1.200 24.500 4 28.600 10 C24.500 16 19.500 18.800 15 18.800 C10.500 18.800 5.500 16 1.400 10 Z" fill="none" stroke="#363636" stroke-width="2.100" stroke-linejoin="round"/><circle cx="15.300" cy="8.700" r="6.800" fill="#363636"/><path d="M10.900 8.300 A4.600 4.600 0 0 1 15.700 3.700" fill="none" stroke="#848685" stroke-width="1.400" stroke-linecap="round"/></svg>
<div class="t" style="top:126.6px;font-size:27.8px;line-height:27.8px;color:#3a3a3a;left:431.3px;">SIMS_EXAM</div>
<div class="b" style="left:657px;top:114px;width:392px;height:50px;border:2px solid #7b7d82;border-radius:5px;"></div>
<div class="t" style="top:126.6px;font-size:26.67px;line-height:26.67px;color:#080808;left:667.5px;">学生姓名</div>
<div class="b" style="left:1067px;top:126px;width:22px;height:22px;border:2px solid #59596a;border-radius:5.500px;"></div>
<div class="b" style="left:1207px;top:126px;width:22px;height:22px;border:2px solid #59596a;border-radius:5.500px;"></div>
<div class="b" style="left:1387px;top:126px;width:22px;height:22px;border:2px solid #59596a;border-radius:5.500px;"></div>
<div class="b" style="left:1516px;top:114px;width:400px;height:50px;border:2px solid #7b7d82;border-radius:5px;"></div>
<div class="t" style="top:126.3px;font-size:28.3px;line-height:28.3px;color:#080808;left:1528.5px;">名称</div>
<svg class="b" style="left:1889px;top:132px;" width="20" height="14" viewBox="0 0 20 14"><path d="M3 3.500 L10 10.500 L17 3.500" fill="none" stroke="#111" stroke-width="2.400" stroke-linecap="round" stroke-linejoin="round"/></svg>
<div class="b" style="left:1922px;top:114px;width:194px;height:50px;border:2px solid #7b7d82;border-radius:5px;"></div>
<div class="t" style="top:125.7px;font-size:26.67px;line-height:26.67px;color:#080808;left:1934.0px;-webkit-text-stroke:0.3px #080808;">VARCHAR</div>
<div class="b" style="left:2122px;top:114px;width:150px;height:50px;border:2px solid #7b7d82;border-radius:5px;"></div>
<div class="t" style="top:125.7px;font-size:26.67px;line-height:26.67px;color:#080808;left:2134.5px;-webkit-text-stroke:0.3px #080808;">90</div>
<div class="b" style="left:0px;top:169px;width:2400px;height:60px;background:#8c8c8c;"></div>
<div class="b" style="left:26px;top:174px;width:396px;height:50px;border:2px solid #7b7d82;border-radius:5px;"></div>
<div class="t" style="top:185.7px;font-size:26.67px;line-height:26.67px;color:#080808;left:40.0px;-webkit-text-stroke:0.3px #080808;">MOBILE_PHONE</div>
<div class="b" style="left:0px;top:169px;width:100px;height:60px;background:#8c8c8c;"></div>
<div class="t" style="top:186.7px;font-size:27.6px;line-height:27.6px;color:#3a3a3a;left:-715.7px;width:1500px;text-align:center;">3</div>
<svg class="b" style="left:63px;top:191px;" width="30" height="20" viewBox="0 0 30 20"><path d="M1.400 10 C5.500 4 10.500 1.200 15 1.200 C19.500 1.200 24.500 4 28.600 10 C24.500 16 19.500 18.800 15 18.800 C10.500 18.800 5.500 16 1.400 10 Z" fill="none" stroke="#363636" stroke-width="2.100" stroke-linejoin="round"/><circle cx="15.300" cy="8.700" r="6.800" fill="#363636"/><path d="M10.900 8.300 A4.600 4.600 0 0 1 15.700 3.700" fill="none" stroke="#8c8c8c" stroke-width="1.400" stroke-linecap="round"/></svg>
<div class="t" style="top:186.6px;font-size:27.8px;line-height:27.8px;color:#3a3a3a;left:431.3px;">SIMS_EXAM</div>
<div class="b" style="left:657px;top:174px;width:392px;height:50px;border:2px solid #7b7d82;border-radius:5px;"></div>
<div class="t" style="top:186.6px;font-size:26.67px;line-height:26.67px;color:#080808;left:667.5px;">手机号</div>
<div class="b" style="left:1067px;top:186px;width:22px;height:22px;border:2px solid #59596a;border-radius:5.500px;"></div>
<div class="b" style="left:1207px;top:186px;width:22px;height:22px;border:2px solid #59596a;border-radius:5.500px;"></div>
<div class="b" style="left:1387px;top:186px;width:22px;height:22px;border:2px solid #59596a;border-radius:5.500px;"></div>
<div class="b" style="left:1516px;top:174px;width:400px;height:50px;border:2px solid #7b7d82;border-radius:5px;"></div>
<div class="t" style="top:186.3px;font-size:28.3px;line-height:28.3px;color:#080808;left:1528.5px;">默认字串</div>
<svg class="b" style="left:1889px;top:192px;" width="20" height="14" viewBox="0 0 20 14"><path d="M3 3.500 L10 10.500 L17 3.500" fill="none" stroke="#111" stroke-width="2.400" stroke-linecap="round" stroke-linejoin="round"/></svg>
<div class="b" style="left:1922px;top:174px;width:194px;height:50px;border:2px solid #7b7d82;border-radius:5px;"></div>
<div class="t" style="top:185.7px;font-size:26.67px;line-height:26.67px;color:#080808;left:1934.0px;-webkit-text-stroke:0.3px #080808;">VARCHAR</div>
<div class="b" style="left:2122px;top:174px;width:150px;height:50px;border:2px solid #7b7d82;border-radius:5px;"></div>
<div class="t" style="top:185.7px;font-size:26.67px;line-height:26.67px;color:#080808;left:2134.5px;-webkit-text-stroke:0.3px #080808;">255</div>
<div class="b" style="left:0px;top:229px;width:2400px;height:60px;background:#848685;"></div>
<div class="b" style="left:26px;top:234px;width:396px;height:50px;border:2px solid #7b7d82;border-radius:5px;"></div>
<div class="t" style="top:245.7px;font-size:26.67px;line-height:26.67px;color:#080808;left:40.0px;-webkit-text-stroke:0.3px #080808;">GENDER</div>
<div class="b" style="left:0px;top:229px;width:100px;height:60px;background:#848685;"></div>
<div class="t" style="top:246.7px;font-size:27.6px;line-height:27.6px;color:#3a3a3a;left:-715.7px;width:1500px;text-align:center;">4</div>
<svg class="b" style="left:63px;top:251px;" width="30" height="20" viewBox="0 0 30 20"><path d="M1.400 10 C5.500 4 10.500 1.200 15 1.200 C19.500 1.200 24.500 4 28.600 10 C24.500 16 19.500 18.800 15 18.800 C10.500 18.800 5.500 16 1.400 10 Z" fill="none" stroke="#363636" stroke-width="2.100" stroke-linejoin="round"/><circle cx="15.300" cy="8.700" r="6.800" fill="#363636"/><path d="M10.900 8.300 A4.600 4.600 0 0 1 15.700 3.700" fill="none" stroke="#848685" stroke-width="1.400" stroke-linecap="round"/></svg>
<div class="t" style="top:246.6px;font-size:27.8px;line-height:27.8px;color:#3a3a3a;left:431.3px;">SIMS_EXAM</div>
<div class="b" style="left:657px;top:234px;width:392px;height:50px;border:2px solid #7b7d82;border-radius:5px;"></div>
<div class="t" style="top:246.6px;font-size:26.67px;line-height:26.67px;color:#080808;left:667.5px;">性别</div>
<div class="b" style="left:1067px;top:246px;width:22px;height:22px;border:2px solid #59596a;border-radius:5.500px;"></div>
<div class="b" style="left:1207px;top:246px;width:22px;height:22px;border:2px solid #59596a;border-radius:5.500px;"></div>
<div class="b" style="left:1387px;top:246px;width:22px;height:22px;border:2px solid #59596a;border-radius:5.500px;"></div>
<div class="b" style="left:1516px;top:234px;width:400px;height:50px;border:2px solid #7b7d82;border-radius:5px;"></div>
<div class="t" style="top:246.3px;font-size:28.3px;line-height:28.3px;color:#080808;left:1528.5px;">数据字典</div>
<svg class="b" style="left:1889px;top:252px;" width="20" height="14" viewBox="0 0 20 14"><path d="M3 3.500 L10 10.500 L17 3.500" fill="none" stroke="#111" stroke-width="2.400" stroke-linecap="round" stroke-linejoin="round"/></svg>
<div class="b" style="left:1922px;top:234px;width:194px;height:50px;border:2px solid #7b7d82;border-radius:5px;"></div>
<div class="t" style="top:245.7px;font-size:26.67px;line-height:26.67px;color:#080808;left:1934.0px;-webkit-text-stroke:0.3px #080808;">VARCHAR</div>
<div class="b" style="left:2122px;top:234px;width:150px;height:50px;border:2px solid #7b7d82;border-radius:5px;"></div>
<div class="t" style="top:245.7px;font-size:26.67px;line-height:26.67px;color:#080808;left:2134.5px;-webkit-text-stroke:0.3px #080808;">32</div>
<div class="b" style="left:0px;top:289px;width:2400px;height:60px;background:#8c8c8c;"></div>
<div class="b" style="left:26px;top:294px;width:396px;height:50px;border:2px solid #7b7d82;border-radius:5px;"></div>
<div class="t" style="top:305.7px;font-size:26.67px;line-height:26.67px;color:#080808;left:40.0px;-webkit-text-stroke:0.3px #080808;">PERSON_NAME</div>
<div class="b" style="left:0px;top:289px;width:100px;height:60px;background:#8c8c8c;"></div>
<div class="t" style="top:306.7px;font-size:27.6px;line-height:27.6px;color:#3a3a3a;left:-715.7px;width:1500px;text-align:center;">5</div>
<svg class="b" style="left:63px;top:311px;" width="30" height="20" viewBox="0 0 30 20"><path d="M1.400 10 C5.500 4 10.500 1.200 15 1.200 C19.500 1.200 24.500 4 28.600 10 C24.500 16 19.500 18.800 15 18.800 C10.500 18.800 5.500 16 1.400 10 Z" fill="none" stroke="#363636" stroke-width="2.100" stroke-linejoin="round"/><circle cx="15.300" cy="8.700" r="6.800" fill="#363636"/><path d="M10.900 8.300 A4.600 4.600 0 0 1 15.700 3.700" fill="none" stroke="#8c8c8c" stroke-width="1.400" stroke-linecap="round"/></svg>
<div class="t" style="top:306.6px;font-size:27.8px;line-height:27.8px;color:#3a3a3a;left:431.3px;">SIMS_EXAM</div>
<div class="b" style="left:657px;top:294px;width:392px;height:50px;border:2px solid #7b7d82;border-radius:5px;"></div>
<div class="t" style="top:306.6px;font-size:26.67px;line-height:26.67px;color:#080808;left:667.5px;">姓名</div>
<div class="b" style="left:1067px;top:306px;width:22px;height:22px;border:2px solid #59596a;border-radius:5.500px;"></div>
<div class="b" style="left:1207px;top:306px;width:22px;height:22px;border:2px solid #59596a;border-radius:5.500px;"></div>
<div class="b" style="left:1387px;top:306px;width:22px;height:22px;border:2px solid #59596a;border-radius:5.500px;"></div>
<div class="b" style="left:1516px;top:294px;width:400px;height:50px;border:2px solid #7b7d82;border-radius:5px;"></div>
<div class="t" style="top:306.3px;font-size:28.3px;line-height:28.3px;color:#080808;left:1528.5px;">名称</div>
<svg class="b" style="left:1889px;top:312px;" width="20" height="14" viewBox="0 0 20 14"><path d="M3 3.500 L10 10.500 L17 3.500" fill="none" stroke="#111" stroke-width="2.400" stroke-linecap="round" stroke-linejoin="round"/></svg>
<div class="b" style="left:1922px;top:294px;width:194px;height:50px;border:2px solid #7b7d82;border-radius:5px;"></div>
<div class="t" style="top:305.7px;font-size:26.67px;line-height:26.67px;color:#080808;left:1934.0px;-webkit-text-stroke:0.3px #080808;">VARCHAR</div>
<div class="b" style="left:2122px;top:294px;width:150px;height:50px;border:2px solid #7b7d82;border-radius:5px;"></div>
<div class="t" style="top:305.7px;font-size:26.67px;line-height:26.67px;color:#080808;left:2134.5px;-webkit-text-stroke:0.3px #080808;">90</div>
<div class="b" style="left:0px;top:349px;width:2400px;height:60px;background:#848685;"></div>
<div class="b" style="left:26px;top:354px;width:396px;height:50px;border:2px solid #7b7d82;border-radius:5px;"></div>
<div class="t" style="top:365.7px;font-size:26.67px;line-height:26.67px;color:#080808;left:40.0px;-webkit-text-stroke:0.3px #080808;">PERSON_ID</div>
<div class="b" style="left:0px;top:349px;width:100px;height:60px;background:#848685;"></div>
<div class="t" style="top:366.7px;font-size:27.6px;line-height:27.6px;color:#3a3a3a;left:-715.7px;width:1500px;text-align:center;">6</div>
<svg class="b" style="left:63px;top:371px;" width="30" height="20" viewBox="0 0 30 20"><path d="M1.400 10 C5.500 4 10.500 1.200 15 1.200 C19.500 1.200 24.500 4 28.600 10 C24.500 16 19.500 18.800 15 18.800 C10.500 18.800 5.500 16 1.400 10 Z" fill="none" stroke="#363636" stroke-width="2.100" stroke-linejoin="round"/><circle cx="15.300" cy="8.700" r="6.800" fill="#363636"/><path d="M10.900 8.300 A4.600 4.600 0 0 1 15.700 3.700" fill="none" stroke="#848685" stroke-width="1.400" stroke-linecap="round"/></svg>
<div class="t" style="top:366.6px;font-size:27.8px;line-height:27.8px;color:#3a3a3a;left:431.3px;">SIMS_EXAM</div>
<div class="b" style="left:657px;top:354px;width:392px;height:50px;border:2px solid #7b7d82;border-radius:5px;"></div>
<div class="t" style="top:366.6px;font-size:26.67px;line-height:26.67px;color:#080808;left:667.5px;">人员ID</div>
<div class="b" style="left:1067px;top:366px;width:22px;height:22px;border:2px solid #59596a;border-radius:5.500px;"></div>
<div class="b" style="left:1207px;top:366px;width:22px;height:22px;border:2px solid #59596a;border-radius:5.500px;"></div>
<div class="b" style="left:1387px;top:366px;width:22px;height:22px;border:2px solid #59596a;border-radius:5.500px;"></div>
<div class="b" style="left:1516px;top:354px;width:400px;height:50px;border:2px solid #7b7d82;border-radius:5px;"></div>
<div class="t" style="top:366.3px;font-size:28.3px;line-height:28.3px;color:#080808;left:1528.5px;">主键标识</div>
<svg class="b" style="left:1889px;top:372px;" width="20" height="14" viewBox="0 0 20 14"><path d="M3 3.500 L10 10.500 L17 3.500" fill="none" stroke="#111" stroke-width="2.400" stroke-linecap="round" stroke-linejoin="round"/></svg>
<div class="b" style="left:1922px;top:354px;width:194px;height:50px;border:2px solid #7b7d82;border-radius:5px;"></div>
<div class="t" style="top:365.7px;font-size:26.67px;line-height:26.67px;color:#080808;left:1934.0px;-webkit-text-stroke:0.3px #080808;">VARCHAR</div>
<div class="b" style="left:2122px;top:354px;width:150px;height:50px;border:2px solid #7b7d82;border-radius:5px;"></div>
<div class="t" style="top:365.7px;font-size:26.67px;line-height:26.67px;color:#080808;left:2134.5px;-webkit-text-stroke:0.3px #080808;">32</div>
<div class="b" style="left:0px;top:409px;width:2400px;height:60px;background:#8c8c8c;"></div>
<div class="b" style="left:26px;top:414px;width:396px;height:50px;border:2px solid #7b7d82;border-radius:5px;"></div>
<div class="t" style="top:425.7px;font-size:26.67px;line-height:26.67px;color:#080808;left:40.0px;-webkit-text-stroke:0.3px #080808;">EXAM_DATE</div>
<div class="b" style="left:0px;top:409px;width:100px;height:60px;background:#8c8c8c;"></div>
<div class="t" style="top:426.7px;font-size:27.6px;line-height:27.6px;color:#3a3a3a;left:-715.7px;width:1500px;text-align:center;">7</div>
<svg class="b" style="left:63px;top:431px;" width="30" height="20" viewBox="0 0 30 20"><path d="M1.400 10 C5.500 4 10.500 1.200 15 1.200 C19.500 1.200 24.500 4 28.600 10 C24.500 16 19.500 18.800 15 18.800 C10.500 18.800 5.500 16 1.400 10 Z" fill="none" stroke="#363636" stroke-width="2.100" stroke-linejoin="round"/><circle cx="15.300" cy="8.700" r="6.800" fill="#363636"/><path d="M10.900 8.300 A4.600 4.600 0 0 1 15.700 3.700" fill="none" stroke="#8c8c8c" stroke-width="1.400" stroke-linecap="round"/></svg>
<div class="t" style="top:426.6px;font-size:27.8px;line-height:27.8px;color:#3a3a3a;left:431.3px;">SIMS_EXAM</div>
<div class="b" style="left:657px;top:414px;width:392px;height:50px;border:2px solid #7b7d82;border-radius:5px;"></div>
<div class="t" style="top:426.6px;font-size:26.67px;line-height:26.67px;color:#080808;left:667.5px;">考试日期</div>
<div class="b" style="left:1067px;top:426px;width:22px;height:22px;border:2px solid #59596a;border-radius:5.500px;"></div>
<div class="b" style="left:1207px;top:426px;width:22px;height:22px;border:2px solid #59596a;border-radius:5.500px;"></div>
<div class="b" style="left:1387px;top:426px;width:22px;height:22px;border:2px solid #59596a;border-radius:5.500px;"></div>
<div class="b" style="left:1516px;top:414px;width:400px;height:50px;border:2px solid #7b7d82;border-radius:5px;"></div>
<div class="t" style="top:426.3px;font-size:28.3px;line-height:28.3px;color:#080808;left:1528.5px;">日期时间</div>
<svg class="b" style="left:1889px;top:432px;" width="20" height="14" viewBox="0 0 20 14"><path d="M3 3.500 L10 10.500 L17 3.500" fill="none" stroke="#111" stroke-width="2.400" stroke-linecap="round" stroke-linejoin="round"/></svg>
<div class="b" style="left:1922px;top:414px;width:194px;height:50px;border:2px solid #7b7d82;border-radius:5px;"></div>
<div class="t" style="top:425.7px;font-size:26.67px;line-height:26.67px;color:#080808;left:1934.0px;-webkit-text-stroke:0.3px #080808;">DATETIME</div>
<div class="b" style="left:2122px;top:414px;width:150px;height:50px;border:2px solid #7b7d82;border-radius:5px;"></div>
<div class="t" style="top:425.7px;font-size:26.67px;line-height:26.67px;color:#080808;left:2134.5px;-webkit-text-stroke:0.3px #080808;"></div>
<div class="b" style="left:0px;top:469px;width:2400px;height:60px;background:#848685;"></div>
<div class="b" style="left:26px;top:474px;width:396px;height:50px;border:2px solid #7b7d82;border-radius:5px;"></div>
<div class="t" style="top:485.7px;font-size:26.67px;line-height:26.67px;color:#080808;left:40.0px;-webkit-text-stroke:0.3px #080808;">EXAM_SCORE</div>
<div class="b" style="left:0px;top:469px;width:100px;height:60px;background:#848685;"></div>
<div class="t" style="top:486.7px;font-size:27.6px;line-height:27.6px;color:#3a3a3a;left:-715.7px;width:1500px;text-align:center;">8</div>
<svg class="b" style="left:63px;top:491px;" width="30" height="20" viewBox="0 0 30 20"><path d="M1.400 10 C5.500 4 10.500 1.200 15 1.200 C19.500 1.200 24.500 4 28.600 10 C24.500 16 19.500 18.800 15 18.800 C10.500 18.800 5.500 16 1.400 10 Z" fill="none" stroke="#363636" stroke-width="2.100" stroke-linejoin="round"/><circle cx="15.300" cy="8.700" r="6.800" fill="#363636"/><path d="M10.900 8.300 A4.600 4.600 0 0 1 15.700 3.700" fill="none" stroke="#848685" stroke-width="1.400" stroke-linecap="round"/></svg>
<div class="t" style="top:486.6px;font-size:27.8px;line-height:27.8px;color:#3a3a3a;left:431.3px;">SIMS_EXAM</div>
<div class="b" style="left:657px;top:474px;width:392px;height:50px;border:2px solid #7b7d82;border-radius:5px;"></div>
<div class="t" style="top:486.6px;font-size:26.67px;line-height:26.67px;color:#080808;left:667.5px;">考试成绩</div>
<div class="b" style="left:1067px;top:486px;width:22px;height:22px;border:2px solid #59596a;border-radius:5.500px;"></div>
<div class="b" style="left:1207px;top:486px;width:22px;height:22px;border:2px solid #59596a;border-radius:5.500px;"></div>
<div class="b" style="left:1387px;top:486px;width:22px;height:22px;border:2px solid #59596a;border-radius:5.500px;"></div>
<div class="b" style="left:1516px;top:474px;width:400px;height:50px;border:2px solid #7b7d82;border-radius:5px;"></div>
<div class="t" style="top:486.3px;font-size:28.3px;line-height:28.3px;color:#080808;left:1528.5px;">小数</div>
<svg class="b" style="left:1889px;top:492px;" width="20" height="14" viewBox="0 0 20 14"><path d="M3 3.500 L10 10.500 L17 3.500" fill="none" stroke="#111" stroke-width="2.400" stroke-linecap="round" stroke-linejoin="round"/></svg>
<div class="b" style="left:1922px;top:474px;width:194px;height:50px;border:2px solid #7b7d82;border-radius:5px;"></div>
<div class="t" style="top:485.7px;font-size:26.67px;line-height:26.67px;color:#080808;left:1934.0px;-webkit-text-stroke:0.3px #080808;">DECIMAL</div>
<div class="b" style="left:2122px;top:474px;width:150px;height:50px;border:2px solid #7b7d82;border-radius:5px;"></div>
<div class="t" style="top:485.7px;font-size:26.67px;line-height:26.67px;color:#080808;left:2134.5px;-webkit-text-stroke:0.3px #080808;">24</div>
<div class="b" style="left:0px;top:529px;width:2400px;height:60px;background:#8c8c8c;"></div>
<div class="b" style="left:26px;top:534px;width:396px;height:50px;border:2px solid #7b7d82;border-radius:5px;"></div>
<div class="t" style="top:545.7px;font-size:26.67px;line-height:26.67px;color:#080808;left:40.0px;-webkit-text-stroke:0.3px #080808;">TENANT_ID</div>
<div class="b" style="left:0px;top:529px;width:100px;height:60px;background:#8c8c8c;"></div>
<div class="t" style="top:546.7px;font-size:27.6px;line-height:27.6px;color:#3a3a3a;left:-715.7px;width:1500px;text-align:center;">9</div>
<svg class="b" style="left:63px;top:548.3px;" width="30" height="23" viewBox="0 0 30 23"><path d="M18 3.600 C11 3.600 5 7 2 11.500 C4 14.500 6.500 17.500 10 19.500" fill="none" stroke="#363636" stroke-width="2.200" stroke-linecap="round" stroke-linejoin="round"/><path d="M17.800 5.200 A6.300 6.300 0 0 0 11.800 17.200 Z" fill="#363636"/><path d="M19.300 2.200 L9.700 21.300" stroke="#363636" stroke-width="3.300"/><path d="M11.300 9.800 A3.600 3.600 0 0 1 14.200 7.200" fill="none" stroke="#8c8c8c" stroke-width="1.300" stroke-linecap="round"/><path d="M23.400 6.400 C25.600 7.800 27.600 9.600 28.600 11.500 C25.500 16.300 21 19.300 15.500 19.800" fill="none" stroke="#363636" stroke-width="1.700" stroke-linecap="round"/><path d="M21.300 9.600 C21.600 12 20.400 14.400 18.200 15.800" fill="none" stroke="#363636" stroke-width="1.500" stroke-linecap="round"/></svg>
<div class="t" style="top:546.6px;font-size:27.8px;line-height:27.8px;color:#3a3a3a;left:431.3px;">SIMS_EXAM</div>
<div class="b" style="left:657px;top:534px;width:392px;height:50px;border:2px solid #7b7d82;border-radius:5px;"></div>
<div class="t" style="top:546.6px;font-size:26.67px;line-height:26.67px;color:#080808;left:667.5px;">租户号</div>
<div class="b" style="left:1067px;top:546px;width:22px;height:22px;border:2px solid #59596a;border-radius:5.500px;"></div>
<div class="b" style="left:1207px;top:546px;width:22px;height:22px;border:2px solid #59596a;border-radius:5.500px;"></div>
<div class="b" style="left:1387px;top:546px;width:22px;height:22px;border:2px solid #59596a;border-radius:5.500px;"></div>
<div class="b" style="left:1516px;top:534px;width:400px;height:50px;border:2px solid #7b7d82;border-radius:5px;"></div>
<div class="t" style="top:546.3px;font-size:28.3px;line-height:28.3px;color:#080808;left:1528.5px;">主键标识</div>
<svg class="b" style="left:1889px;top:552px;" width="20" height="14" viewBox="0 0 20 14"><path d="M3 3.500 L10 10.500 L17 3.500" fill="none" stroke="#111" stroke-width="2.400" stroke-linecap="round" stroke-linejoin="round"/></svg>
<div class="b" style="left:1922px;top:534px;width:194px;height:50px;border:2px solid #7b7d82;border-radius:5px;"></div>
<div class="t" style="top:545.7px;font-size:26.67px;line-height:26.67px;color:#080808;left:1934.0px;-webkit-text-stroke:0.3px #080808;">VARCHAR</div>
<div class="b" style="left:2122px;top:534px;width:150px;height:50px;border:2px solid #7b7d82;border-radius:5px;"></div>
<div class="t" style="top:545.7px;font-size:26.67px;line-height:26.67px;color:#080808;left:2134.5px;-webkit-text-stroke:0.3px #080808;">32</div>
<div class="b" style="left:0px;top:589px;width:2400px;height:60px;background:#848685;"></div>
<div class="b" style="left:26px;top:594px;width:396px;height:50px;border:2px solid #7b7d82;border-radius:5px;"></div>
<div class="t" style="top:605.7px;font-size:26.67px;line-height:26.67px;color:#080808;left:40.0px;-webkit-text-stroke:0.3px #080808;">REVISION</div>
<div class="b" style="left:0px;top:589px;width:100px;height:60px;background:#848685;"></div>
<div class="t" style="top:606.7px;font-size:27.6px;line-height:27.6px;color:#3a3a3a;left:-715.7px;width:1500px;text-align:center;">10</div>
<svg class="b" style="left:63px;top:608.3px;" width="30" height="23" viewBox="0 0 30 23"><path d="M18 3.600 C11 3.600 5 7 2 11.500 C4 14.500 6.500 17.500 10 19.500" fill="none" stroke="#363636" stroke-width="2.200" stroke-linecap="round" stroke-linejoin="round"/><path d="M17.800 5.200 A6.300 6.300 0 0 0 11.800 17.200 Z" fill="#363636"/><path d="M19.300 2.200 L9.700 21.300" stroke="#363636" stroke-width="3.300"/><path d="M11.300 9.800 A3.600 3.600 0 0 1 14.200 7.200" fill="none" stroke="#848685" stroke-width="1.300" stroke-linecap="round"/><path d="M23.400 6.400 C25.600 7.800 27.600 9.600 28.600 11.500 C25.500 16.300 21 19.300 15.500 19.800" fill="none" stroke="#363636" stroke-width="1.700" stroke-linecap="round"/><path d="M21.300 9.600 C21.600 12 20.400 14.400 18.200 15.800" fill="none" stroke="#363636" stroke-width="1.500" stroke-linecap="round"/></svg>
<div class="t" style="top:606.6px;font-size:27.8px;line-height:27.8px;color:#3a3a3a;left:431.3px;">SIMS_EXAM</div>
<div class="b" style="left:657px;top:594px;width:392px;height:50px;border:2px solid #7b7d82;border-radius:5px;"></div>
<div class="t" style="top:606.6px;font-size:26.67px;line-height:26.67px;color:#080808;left:667.5px;">乐观锁</div>
<div class="b" style="left:1067px;top:606px;width:22px;height:22px;border:2px solid #59596a;border-radius:5.500px;"></div>
<div class="b" style="left:1207px;top:606px;width:22px;height:22px;border:2px solid #59596a;border-radius:5.500px;"></div>
<div class="b" style="left:1387px;top:606px;width:22px;height:22px;border:2px solid #59596a;border-radius:5.500px;"></div>
<div class="b" style="left:1516px;top:594px;width:400px;height:50px;border:2px solid #7b7d82;border-radius:5px;"></div>
<div class="t" style="top:606.3px;font-size:28.3px;line-height:28.3px;color:#080808;left:1528.5px;">整数</div>
<svg class="b" style="left:1889px;top:612px;" width="20" height="14" viewBox="0 0 20 14"><path d="M3 3.500 L10 10.500 L17 3.500" fill="none" stroke="#111" stroke-width="2.400" stroke-linecap="round" stroke-linejoin="round"/></svg>
<div class="b" style="left:1922px;top:594px;width:194px;height:50px;border:2px solid #7b7d82;border-radius:5px;"></div>
<div class="t" style="top:605.7px;font-size:26.67px;line-height:26.67px;color:#080808;left:1934.0px;-webkit-text-stroke:0.3px #080808;">INT</div>
<div class="b" style="left:2122px;top:594px;width:150px;height:50px;border:2px solid #7b7d82;border-radius:5px;"></div>
<div class="t" style="top:605.7px;font-size:26.67px;line-height:26.67px;color:#080808;left:2134.5px;-webkit-text-stroke:0.3px #080808;"></div>
<div class="b" style="left:0px;top:649px;width:2400px;height:60px;background:#8c8c8c;"></div>
<div class="b" style="left:26px;top:654px;width:396px;height:50px;border:2px solid #7b7d82;border-radius:5px;"></div>
<div class="t" style="top:665.7px;font-size:26.67px;line-height:26.67px;color:#080808;left:40.0px;-webkit-text-stroke:0.3px #080808;">CREATED_BY</div>
<div class="b" style="left:0px;top:649px;width:100px;height:60px;background:#8c8c8c;"></div>
<div class="t" style="top:666.7px;font-size:27.6px;line-height:27.6px;color:#3a3a3a;left:-715.7px;width:1500px;text-align:center;">11</div>
<svg class="b" style="left:63px;top:668.3px;" width="30" height="23" viewBox="0 0 30 23"><path d="M18 3.600 C11 3.600 5 7 2 11.500 C4 14.500 6.500 17.500 10 19.500" fill="none" stroke="#363636" stroke-width="2.200" stroke-linecap="round" stroke-linejoin="round"/><path d="M17.800 5.200 A6.300 6.300 0 0 0 11.800 17.200 Z" fill="#363636"/><path d="M19.300 2.200 L9.700 21.300" stroke="#363636" stroke-width="3.300"/><path d="M11.300 9.800 A3.600 3.600 0 0 1 14.200 7.200" fill="none" stroke="#8c8c8c" stroke-width="1.300" stroke-linecap="round"/><path d="M23.400 6.400 C25.600 7.800 27.600 9.600 28.600 11.500 C25.500 16.300 21 19.300 15.500 19.800" fill="none" stroke="#363636" stroke-width="1.700" stroke-linecap="round"/><path d="M21.300 9.600 C21.600 12 20.400 14.400 18.200 15.800" fill="none" stroke="#363636" stroke-width="1.500" stroke-linecap="round"/></svg>
<div class="t" style="top:666.6px;font-size:27.8px;line-height:27.8px;color:#3a3a3a;left:431.3px;">SIMS_EXAM</div>
<div class="b" style="left:657px;top:654px;width:392px;height:50px;border:2px solid #7b7d82;border-radius:5px;"></div>
<div class="t" style="top:666.6px;font-size:26.67px;line-height:26.67px;color:#080808;left:667.5px;">创建人</div>
<div class="b" style="left:1067px;top:666px;width:22px;height:22px;border:2px solid #59596a;border-radius:5.500px;"></div>
<div class="b" style="left:1207px;top:666px;width:22px;height:22px;border:2px solid #59596a;border-radius:5.500px;"></div>
<div class="b" style="left:1387px;top:666px;width:22px;height:22px;border:2px solid #59596a;border-radius:5.500px;"></div>
<div class="b" style="left:1516px;top:654px;width:400px;height:50px;border:2px solid #7b7d82;border-radius:5px;"></div>
<div class="t" style="top:666.3px;font-size:28.3px;line-height:28.3px;color:#080808;left:1528.5px;">主键标识</div>
<svg class="b" style="left:1889px;top:672px;" width="20" height="14" viewBox="0 0 20 14"><path d="M3 3.500 L10 10.500 L17 3.500" fill="none" stroke="#111" stroke-width="2.400" stroke-linecap="round" stroke-linejoin="round"/></svg>
<div class="b" style="left:1922px;top:654px;width:194px;height:50px;border:2px solid #7b7d82;border-radius:5px;"></div>
<div class="t" style="top:665.7px;font-size:26.67px;line-height:26.67px;color:#080808;left:1934.0px;-webkit-text-stroke:0.3px #080808;">VARCHAR</div>
<div class="b" style="left:2122px;top:654px;width:150px;height:50px;border:2px solid #7b7d82;border-radius:5px;"></div>
<div class="t" style="top:665.7px;font-size:26.67px;line-height:26.67px;color:#080808;left:2134.5px;-webkit-text-stroke:0.3px #080808;">32</div>
<div class="b" style="left:0px;top:709px;width:2400px;height:60px;background:#848685;"></div>
<div class="b" style="left:26px;top:714px;width:396px;height:50px;border:2px solid #7b7d82;border-radius:5px;"></div>
<div class="t" style="top:725.7px;font-size:26.67px;line-height:26.67px;color:#080808;left:40.0px;-webkit-text-stroke:0.3px #080808;">CREATED_TIME</div>
<div class="b" style="left:0px;top:709px;width:100px;height:60px;background:#848685;"></div>
<div class="t" style="top:726.7px;font-size:27.6px;line-height:27.6px;color:#3a3a3a;left:-715.7px;width:1500px;text-align:center;">12</div>
<svg class="b" style="left:63px;top:728.3px;" width="30" height="23" viewBox="0 0 30 23"><path d="M18 3.600 C11 3.600 5 7 2 11.500 C4 14.500 6.500 17.500 10 19.500" fill="none" stroke="#363636" stroke-width="2.200" stroke-linecap="round" stroke-linejoin="round"/><path d="M17.800 5.200 A6.300 6.300 0 0 0 11.800 17.200 Z" fill="#363636"/><path d="M19.300 2.200 L9.700 21.300" stroke="#363636" stroke-width="3.300"/><path d="M11.300 9.800 A3.600 3.600 0 0 1 14.200 7.200" fill="none" stroke="#848685" stroke-width="1.300" stroke-linecap="round"/><path d="M23.400 6.400 C25.600 7.800 27.600 9.600 28.600 11.500 C25.500 16.300 21 19.300 15.500 19.800" fill="none" stroke="#363636" stroke-width="1.700" stroke-linecap="round"/><path d="M21.300 9.600 C21.600 12 20.400 14.400 18.200 15.800" fill="none" stroke="#363636" stroke-width="1.500" stroke-linecap="round"/></svg>
<div class="t" style="top:726.6px;font-size:27.8px;line-height:27.8px;color:#3a3a3a;left:431.3px;">SIMS_EXAM</div>
<div class="b" style="left:657px;top:714px;width:392px;height:50px;border:2px solid #7b7d82;border-radius:5px;"></div>
<div class="t" style="top:726.6px;font-size:26.67px;line-height:26.67px;color:#080808;left:667.5px;">创建时间</div>
<div class="b" style="left:1067px;top:726px;width:22px;height:22px;border:2px solid #59596a;border-radius:5.500px;"></div>
<div class="b" style="left:1207px;top:726px;width:22px;height:22px;border:2px solid #59596a;border-radius:5.500px;"></div>
<div class="b" style="left:1387px;top:726px;width:22px;height:22px;border:2px solid #59596a;border-radius:5.500px;"></div>
<div class="b" style="left:1516px;top:714px;width:400px;height:50px;border:2px solid #7b7d82;border-radius:5px;"></div>
<div class="t" style="top:726.3px;font-size:28.3px;line-height:28.3px;color:#080808;left:1528.5px;">日期时间</div>
<svg class="b" style="left:1889px;top:732px;" width="20" height="14" viewBox="0 0 20 14"><path d="M3 3.500 L10 10.500 L17 3.500" fill="none" stroke="#111" stroke-width="2.400" stroke-linecap="round" stroke-linejoin="round"/></svg>
<div class="b" style="left:1922px;top:714px;width:194px;height:50px;border:2px solid #7b7d82;border-radius:5px;"></div>
<div class="t" style="top:725.7px;font-size:26.67px;line-height:26.67px;color:#080808;left:1934.0px;-webkit-text-stroke:0.3px #080808;">DATETIME</div>
<div class="b" style="left:2122px;top:714px;width:150px;height:50px;border:2px solid #7b7d82;border-radius:5px;"></div>
<div class="t" style="top:725.7px;font-size:26.67px;line-height:26.67px;color:#080808;left:2134.5px;-webkit-text-stroke:0.3px #080808;"></div>
<div class="b" style="left:0px;top:769px;width:2400px;height:60px;background:#8c8c8c;"></div>
<div class="b" style="left:26px;top:774px;width:396px;height:50px;border:2px solid #7b7d82;border-radius:5px;"></div>
<div class="t" style="top:785.7px;font-size:26.67px;line-height:26.67px;color:#080808;left:40.0px;-webkit-text-stroke:0.3px #080808;">UPDATED_BY</div>
<div class="b" style="left:0px;top:769px;width:100px;height:60px;background:#8c8c8c;"></div>
<div class="t" style="top:786.7px;font-size:27.6px;line-height:27.6px;color:#3a3a3a;left:-715.7px;width:1500px;text-align:center;">13</div>
<svg class="b" style="left:63px;top:788.3px;" width="30" height="23" viewBox="0 0 30 23"><path d="M18 3.600 C11 3.600 5 7 2 11.500 C4 14.500 6.500 17.500 10 19.500" fill="none" stroke="#363636" stroke-width="2.200" stroke-linecap="round" stroke-linejoin="round"/><path d="M17.800 5.200 A6.300 6.300 0 0 0 11.800 17.200 Z" fill="#363636"/><path d="M19.300 2.200 L9.700 21.300" stroke="#363636" stroke-width="3.300"/><path d="M11.300 9.800 A3.600 3.600 0 0 1 14.200 7.200" fill="none" stroke="#8c8c8c" stroke-width="1.300" stroke-linecap="round"/><path d="M23.400 6.400 C25.600 7.800 27.600 9.600 28.600 11.500 C25.500 16.300 21 19.300 15.500 19.800" fill="none" stroke="#363636" stroke-width="1.700" stroke-linecap="round"/><path d="M21.300 9.600 C21.600 12 20.400 14.400 18.200 15.800" fill="none" stroke="#363636" stroke-width="1.500" stroke-linecap="round"/></svg>
<div class="t" style="top:786.6px;font-size:27.8px;line-height:27.8px;color:#3a3a3a;left:431.3px;">SIMS_EXAM</div>
<div class="b" style="left:657px;top:774px;width:392px;height:50px;border:2px solid #7b7d82;border-radius:5px;"></div>
<div class="t" style="top:786.6px;font-size:26.67px;line-height:26.67px;color:#080808;left:667.5px;">更新人</div>
<div class="b" style="left:1067px;top:786px;width:22px;height:22px;border:2px solid #59596a;border-radius:5.500px;"></div>
<div class="b" style="left:1207px;top:786px;width:22px;height:22px;border:2px solid #59596a;border-radius:5.500px;"></div>
<div class="b" style="left:1387px;top:786px;width:22px;height:22px;border:2px solid #59596a;border-radius:5.500px;"></div>
<div class="b" style="left:1516px;top:774px;width:400px;height:50px;border:2px solid #7b7d82;border-radius:5px;"></div>
<div class="t" style="top:786.3px;font-size:28.3px;line-height:28.3px;color:#080808;left:1528.5px;">主键标识</div>
<svg class="b" style="left:1889px;top:792px;" width="20" height="14" viewBox="0 0 20 14"><path d="M3 3.500 L10 10.500 L17 3.500" fill="none" stroke="#111" stroke-width="2.400" stroke-linecap="round" stroke-linejoin="round"/></svg>
<div class="b" style="left:1922px;top:774px;width:194px;height:50px;border:2px solid #7b7d82;border-radius:5px;"></div>
<div class="t" style="top:785.7px;font-size:26.67px;line-height:26.67px;color:#080808;left:1934.0px;-webkit-text-stroke:0.3px #080808;">VARCHAR</div>
<div class="b" style="left:2122px;top:774px;width:150px;height:50px;border:2px solid #7b7d82;border-radius:5px;"></div>
<div class="t" style="top:785.7px;font-size:26.67px;line-height:26.67px;color:#080808;left:2134.5px;-webkit-text-stroke:0.3px #080808;">32</div>
<div class="b" style="left:0px;top:0px;width:2400px;height:2px;background:#7b7d82;"></div>
<div class="b" style="left:0px;top:48px;width:2400px;height:2px;background:#7b7d82;"></div>
<div class="b" style="left:0px;top:108px;width:2400px;height:2px;background:#7b7d82;"></div>
<div class="b" style="left:0px;top:168px;width:2400px;height:2px;background:#7b7d82;"></div>
<div class="b" style="left:0px;top:228px;width:2400px;height:2px;background:#7b7d82;"></div>
<div class="b" style="left:0px;top:288px;width:2400px;height:2px;background:#7b7d82;"></div>
<div class="b" style="left:0px;top:348px;width:2400px;height:2px;background:#7b7d82;"></div>
<div class="b" style="left:0px;top:408px;width:2400px;height:2px;background:#7b7d82;"></div>
<div class="b" style="left:0px;top:468px;width:2400px;height:2px;background:#7b7d82;"></div>
<div class="b" style="left:0px;top:528px;width:2400px;height:2px;background:#7b7d82;"></div>
<div class="b" style="left:0px;top:588px;width:2400px;height:2px;background:#7b7d82;"></div>
<div class="b" style="left:0px;top:648px;width:2400px;height:2px;background:#7b7d82;"></div>
<div class="b" style="left:0px;top:708px;width:2400px;height:2px;background:#7b7d82;"></div>
<div class="b" style="left:0px;top:768px;width:2400px;height:2px;background:#7b7d82;"></div>
<div class="b" style="left:0px;top:828px;width:2400px;height:2px;background:#7b7d82;"></div>
<div class="b" style="left:0px;top:0px;width:2px;height:800px;background:#7b7d82;"></div>
<div class="b" style="left:98px;top:0px;width:2px;height:800px;background:#7b7d82;"></div>
<div class="b" style="left:423px;top:0px;width:2px;height:800px;background:#7b7d82;"></div>
<div class="b" style="left:653px;top:0px;width:2px;height:800px;background:#7b7d82;"></div>
<div class="b" style="left:1051px;top:0px;width:2px;height:800px;background:#7b7d82;"></div>
<div class="b" style="left:1191px;top:0px;width:2px;height:800px;background:#7b7d82;"></div>
<div class="b" style="left:1371px;top:0px;width:2px;height:800px;background:#7b7d82;"></div>
<div class="b" style="left:1512px;top:0px;width:2px;height:800px;background:#7b7d82;"></div>
<div class="b" style="left:1918px;top:0px;width:2px;height:800px;background:#7b7d82;"></div>
<div class="b" style="left:2118px;top:0px;width:2px;height:800px;background:#7b7d82;"></div>
<div class="b" style="left:2327px;top:0px;width:2px;height:800px;background:#7b7d82;"></div>
</div>
<div class="b" style="left:2982.5px;top:1042px;width:7.5px;height:676px;background:#7e7f85;border-radius:4px;"></div>
<div class="b" style="left:858px;top:1824px;width:1163.5px;height:8px;background:#7b7c82;border-radius:4px;"></div>
<svg class="b" style="left:780px;top:380px;" width="260" height="140" viewBox="0 0 260 140"><path d="M29.100 17.500 L177.800 81.700 L180.300 63.700 L213 114.500 L152.400 120.100 L165.400 107.100 L25.400 27.800 A5.600 5.600 0 0 1 29.100 17.500 Z" fill="#e8412a" stroke="#e8412a" stroke-width="1" stroke-linejoin="round"/></svg>
<div class="b" style="left:992px;top:307.5px;width:1040px;height:1274px;background:#fff;border-radius:10px;overflow:hidden">
<div class="t" style="top:20.2px;font-size:27.5px;line-height:27.5px;color:#4c4c4c;font-weight:700;left:31.0px;">编辑数据类型</div>
<svg class="b" style="left:996px;top:16.5px;" width="26" height="26" viewBox="0 0 26 26"><path d="M6.800 6.800 L19.200 19.200 M19.200 6.800 L6.800 19.200" stroke="#5a5a5a" stroke-width="5.400" stroke-linecap="round"/></svg>
<div class="b" style="left:0px;top:62.5px;width:1040px;height:2px;background:#dfe3ee;"></div>
<div class="t" style="top:97.3px;font-size:28px;line-height:28px;color:#555;left:-1261.0px;width:1500px;text-align:right;">类型代码</div>
<div class="b" style="left:260px;top:84.5px;width:740px;height:50px;background:#fff;border:2px solid #4e6bf2;border-radius:4.500px;box-shadow:0 0 0 4px #dde3fc;"></div>
<div class="t" style="top:101.5px;font-size:28px;line-height:28px;color:#e8455c;left:112.5px;">*</div>
<div class="t" style="top:96.0px;font-size:26.67px;line-height:26.67px;color:#000;left:272.0px;-webkit-text-stroke:0.3px #000;">string</div>
<div class="t" style="top:167.3px;font-size:28px;line-height:28px;color:#555;left:-1261.0px;width:1500px;text-align:right;">显示名称</div>
<div class="b" style="left:260px;top:154.5px;width:740px;height:50px;background:#fff;border:2px solid #dcdfe8;border-radius:5px;"></div>
<div class="t" style="top:166.9px;font-size:26.67px;line-height:26.67px;color:#000;left:272.0px;">字串</div>
<div class="t" style="top:319.3px;font-size:28px;line-height:28px;color:#555;left:-1261.0px;width:1500px;text-align:right;-webkit-text-stroke:0.25px #555;">MYSQL(默认)</div>
<div class="b" style="left:260px;top:306.5px;width:740px;height:50px;background:#fff;border:2px solid #dcdfe8;border-radius:5px;"></div>
<div class="t" style="top:318.0px;font-size:26.67px;line-height:26.67px;color:#000;left:272.0px;-webkit-text-stroke:0.3px #000;">VARCHAR</div>
<div class="t" style="top:388.3px;font-size:28px;line-height:28px;color:#555;left:-1262.2px;width:1500px;text-align:right;letter-spacing:-1.2px;-webkit-text-stroke:0.25px #555;">ORACLE</div>
<div class="b" style="left:260px;top:376.5px;width:740px;height:50px;background:#fff;border:2px solid #dcdfe8;border-radius:5px;"></div>
<div class="t" style="top:388.0px;font-size:26.67px;line-height:26.67px;color:#000;left:272.0px;-webkit-text-stroke:0.3px #000;">VARCHAR2</div>
<div class="t" style="top:458.3px;font-size:28px;line-height:28px;color:#555;left:-1261.0px;width:1500px;text-align:right;-webkit-text-stroke:0.25px #555;">SQLServer</div>
<div class="b" style="left:260px;top:446.5px;width:740px;height:50px;background:#fff;border:2px solid #dcdfe8;border-radius:5px;"></div>
<div class="t" style="top:458.0px;font-size:26.67px;line-height:26.67px;color:#000;left:272.0px;-webkit-text-stroke:0.3px #000;">VARCHAR</div>
<div class="t" style="top:528.3px;font-size:28px;line-height:28px;color:#555;left:-1261.0px;width:1500px;text-align:right;-webkit-text-stroke:0.25px #555;">PostgreSQL</div>
<div class="b" style="left:260px;top:516.5px;width:740px;height:50px;background:#fff;border:2px solid #dcdfe8;border-radius:5px;"></div>
<div class="t" style="top:528.0px;font-size:26.67px;line-height:26.67px;color:#000;left:272.0px;-webkit-text-stroke:0.3px #000;">VARCHAR</div>
<div class="t" style="top:598.3px;font-size:28px;line-height:28px;color:#555;left:-1261.0px;width:1500px;text-align:right;-webkit-text-stroke:0.25px #555;">DB2</div>
<div class="b" style="left:260px;top:586.5px;width:740px;height:50px;background:#fff;border:2px solid #dcdfe8;border-radius:5px;"></div>
<div class="t" style="top:598.0px;font-size:26.67px;line-height:26.67px;color:#000;left:272.0px;-webkit-text-stroke:0.3px #000;">VARCHAR</div>
<div class="t" style="top:668.3px;font-size:28px;line-height:28px;color:#555;left:-1261.0px;width:1500px;text-align:right;-webkit-text-stroke:0.25px #555;">DM</div>
<div class="b" style="left:260px;top:656.5px;width:740px;height:50px;background:#fff;border:2px solid #dcdfe8;border-radius:5px;"></div>
<div class="t" style="top:668.0px;font-size:26.67px;line-height:26.67px;color:#000;left:272.0px;-webkit-text-stroke:0.3px #000;">VARCHAR2</div>
<div class="t" style="top:738.3px;font-size:28px;line-height:28px;color:#555;left:-1261.0px;width:1500px;text-align:right;-webkit-text-stroke:0.25px #555;">GaussDB</div>
<div class="b" style="left:260px;top:726.5px;width:740px;height:50px;background:#fff;border:2px solid #dcdfe8;border-radius:5px;"></div>
<div class="t" style="top:738.0px;font-size:26.67px;line-height:26.67px;color:#000;left:272.0px;-webkit-text-stroke:0.3px #000;">VARCHAR</div>
<div class="t" style="top:808.3px;font-size:28px;line-height:28px;color:#555;left:-1261.0px;width:1500px;text-align:right;-webkit-text-stroke:0.25px #555;">Kingbase</div>
<div class="b" style="left:260px;top:796.5px;width:740px;height:50px;background:#fff;border:2px solid #dcdfe8;border-radius:5px;"></div>
<div class="t" style="top:808.0px;font-size:26.67px;line-height:26.67px;color:#000;left:272.0px;-webkit-text-stroke:0.3px #000;">VARCHAR</div>
<div class="t" style="top:878.3px;font-size:28px;line-height:28px;color:#555;left:-1260.5px;width:1500px;text-align:right;letter-spacing:0.55px;-webkit-text-stroke:0.25px #555;">MaxCompute</div>
<div class="b" style="left:260px;top:866.5px;width:740px;height:50px;background:#fff;border:2px solid #dcdfe8;border-radius:5px;"></div>
<div class="t" style="top:878.0px;font-size:26.67px;line-height:26.67px;color:#000;left:272.0px;-webkit-text-stroke:0.3px #000;">STRING</div>
<div class="t" style="top:948.3px;font-size:28px;line-height:28px;color:#555;left:-1261.0px;width:1500px;text-align:right;-webkit-text-stroke:0.25px #555;">SQLite</div>
<div class="b" style="left:260px;top:936.5px;width:740px;height:50px;background:#fff;border:2px solid #dcdfe8;border-radius:5px;"></div>
<div class="t" style="top:948.0px;font-size:26.67px;line-height:26.67px;color:#000;left:272.0px;-webkit-text-stroke:0.3px #000;">TEXT</div>
<div class="t" style="top:1100.3px;font-size:28px;line-height:28px;color:#555;left:-1261.0px;width:1500px;text-align:right;-webkit-text-stroke:0.25px #555;">JAVA</div>
<div class="b" style="left:260px;top:1088.5px;width:740px;height:50px;background:#fff;border:2px solid #dcdfe8;border-radius:5px;"></div>
<div class="t" style="top:1100.0px;font-size:26.67px;line-height:26.67px;color:#000;left:272.0px;-webkit-text-stroke:0.3px #000;">String</div>
<div class="t" style="top:1170.3px;font-size:28px;line-height:28px;color:#555;left:-1261.0px;width:1500px;text-align:right;-webkit-text-stroke:0.25px #555;">C#</div>
<div class="b" style="left:260px;top:1158.5px;width:740px;height:50px;background:#fff;border:2px solid #dcdfe8;border-radius:5px;"></div>
<div class="t" style="top:1170.0px;font-size:26.67px;line-height:26.67px;color:#000;left:272.0px;-webkit-text-stroke:0.3px #000;">string</div>
<div class="b" style="left:336.5px;top:94.5px;width:2px;height:30px;background:#000;"></div>
<div class="b" style="left:30px;top:240.5px;width:4px;height:30px;background:#5b74ee;"></div>
<div class="t" style="top:243.5px;font-size:28px;line-height:28px;color:#555;left:44.5px;">数据库</div>
<div class="b" style="left:30px;top:1022.5px;width:4px;height:30px;background:#5b74ee;"></div>
<div class="t" style="top:1025.5px;font-size:28px;line-height:28px;color:#555;left:44.5px;">程序代码</div>
<div class="b" style="left:1016px;top:80.5px;width:8px;height:990px;background:#e2e5ec;border-radius:4px;"></div>
<div class="b" style="left:350px;top:1208.5px;width:160px;height:56px;background:#5873f0;"></div>
<div class="t" style="top:1226.3px;font-size:24px;line-height:24px;color:#fff;left:-320.0px;width:1500px;text-align:center;">确定</div>
<div class="b" style="left:530px;top:1208.5px;width:160px;height:56px;background:#fff;border:2px solid #dfe2ec;"></div>
<div class="t" style="top:1226.3px;font-size:24px;line-height:24px;color:#555;left:-140.0px;width:1500px;text-align:center;">取消</div>
</div>
</div></body></html>
